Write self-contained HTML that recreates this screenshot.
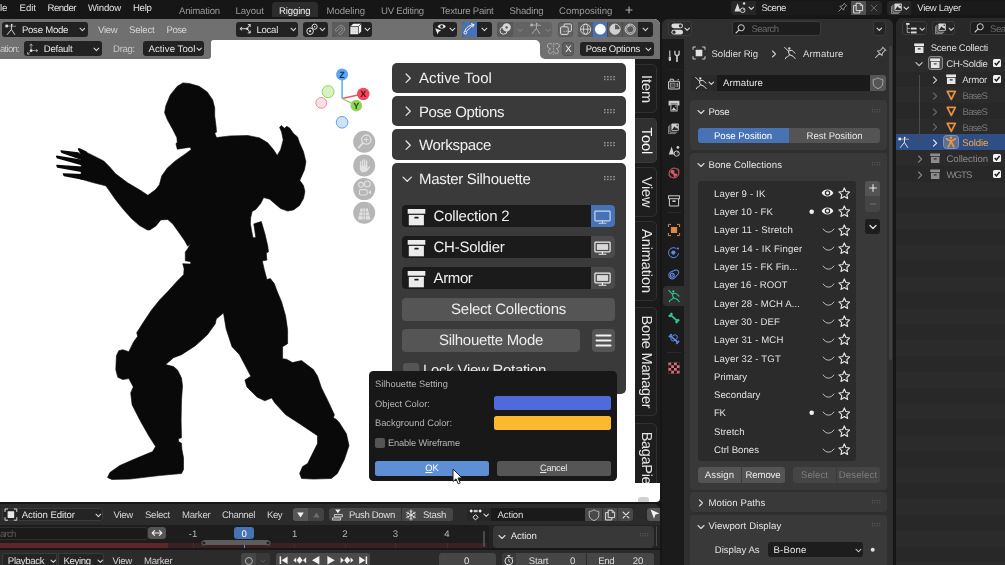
<!DOCTYPE html>
<html><head><meta charset="utf-8"><title>Blender</title>
<style>
html,body{margin:0;padding:0;background:#161616;overflow:hidden}
#r{will-change:transform;text-rendering:geometricPrecision;position:relative;width:1005px;height:565px;overflow:hidden;background:#161616;font-family:"Liberation Sans",sans-serif;}
#r div,#r span,#r svg{position:absolute;display:block;box-sizing:border-box}
#r span{white-space:nowrap}
</style></head><body><div id="r">
<div style="left:0px;top:0px;width:1005px;height:18.5px;background:#161616;border-radius:0px;"></div>
<span style="left:0.00px;top:2px;font-size:9.6px;line-height:14px;color:#e0e0e0;letter-spacing:-0.236px;">le</span>
<span style="left:19.50px;top:2px;font-size:9.6px;line-height:14px;color:#e0e0e0;letter-spacing:-0.010px;">Edit</span>
<span style="left:47.50px;top:2px;font-size:9.6px;line-height:14px;color:#e0e0e0;letter-spacing:-0.498px;">Render</span>
<span style="left:88.00px;top:2px;font-size:9.6px;line-height:14px;color:#e0e0e0;letter-spacing:-0.191px;">Window</span>
<span style="left:133.00px;top:2px;font-size:9.6px;line-height:14px;color:#e0e0e0;letter-spacing:-0.311px;">Help</span>
<div style="left:272px;top:2px;width:46px;height:15.3px;background:#2c2c2c;border-radius:4px 4px 0 0;"></div>
<span style="left:179.00px;top:5px;font-size:9.6px;line-height:14px;color:#9a9a9a;letter-spacing:-0.188px;">Animation</span>
<span style="left:235.50px;top:5px;font-size:9.6px;line-height:14px;color:#9a9a9a;letter-spacing:-0.054px;">Layout</span>
<span style="left:279.00px;top:5px;font-size:9.6px;line-height:14px;color:#f0f0f0;letter-spacing:-0.151px;">Rigging</span>
<span style="left:326.50px;top:5px;font-size:9.6px;line-height:14px;color:#9a9a9a;letter-spacing:-0.057px;">Modeling</span>
<span style="left:381.00px;top:5px;font-size:9.6px;line-height:14px;color:#9a9a9a;letter-spacing:-0.236px;">UV Editing</span>
<span style="left:440.50px;top:5px;font-size:9.6px;line-height:14px;color:#9a9a9a;letter-spacing:-0.233px;">Texture Paint</span>
<span style="left:509.50px;top:5px;font-size:9.6px;line-height:14px;color:#9a9a9a;letter-spacing:-0.176px;">Shading</span>
<span style="left:559.00px;top:5px;font-size:9.6px;line-height:14px;color:#9a9a9a;letter-spacing:0.013px;">Compositing</span>
<svg style="left:624px;top:5px;" width="10" height="10" viewBox="0 0 10 10"><path d="M5 1.5V8.5M1.5 5H8.5" stroke="#b0b0b0" stroke-width="1.1" fill="none"/></svg>
<div style="left:731.4px;top:0.8px;width:150.4px;height:14.4px;background:#262626;border-radius:3px;"></div>
<div style="left:756px;top:0.8px;width:94.8px;height:14.4px;background:#1a1a1a;border-radius:0px;"></div>
<div style="left:850.8px;top:0.8px;width:15.1px;height:14.4px;background:#505050;border-radius:0px;"></div>
<span style="left:761.50px;top:2px;font-size:9.6px;line-height:14px;color:#dcdcdc;letter-spacing:-0.564px;">Scene</span>
<div style="left:886.8px;top:0.8px;width:120px;height:14.4px;background:#262626;border-radius:3px 0 0 3px;"></div>
<div style="left:911.1px;top:0.8px;width:95px;height:14.4px;background:#1a1a1a;border-radius:0px;"></div>
<span style="left:917.30px;top:2px;font-size:9.6px;line-height:14px;color:#dcdcdc;letter-spacing:-0.382px;">View Layer</span>
<div style="left:0px;top:18.5px;width:659.8px;height:483.4px;background:#ffffff;border-radius:0 6px 4px 0;"></div>
<svg style="left:0px;top:60px;" width="400" height="430" viewBox="0 60 400 430"><polygon points="182.9,82.9 189.3,83.5 199.2,86.3 207.2,91.9 212.7,99.9 214.7,107.8 214.7,115.8 216.1,126.7 216.5,132.1 214.7,133.3 216.5,137.6 229.9,135.9 247.8,135.5 259.7,137.9 267.7,142.8 273.6,149.8 277.2,155.4 280.6,149.8 283.2,139.9 281.6,131.9 279.6,127.5 281.2,125.5 284.6,128.3 286.6,126.3 289.6,127.9 293.5,133.5 297.5,136.9 299.5,142.8 303.5,151.8 305.9,161.7 304.5,169.7 300.5,178.7 299.9,180.6 303.5,185.6 304.9,191.6 303.5,198.6 299.5,205.5 293.5,209.9 287.6,211.1 280.6,208.5 274.6,203.5 269.7,199.2 263.7,197.6 260.7,203.5 255.7,209.5 252.1,211.5 250.7,217.5 250.4,223.9 251.8,231.8 253.0,237.8 255.8,237.4 253.8,223.9 261.3,221.5 264.9,233.8 267.7,245.8 268.5,251.7 266.3,253.1 266.9,260.1 262.3,260.9 264.3,269.7 266.9,279.6 270.3,278.6 274.3,283.6 276.6,290.0 281.6,301.9 285.6,315.9 287.6,329.8 287.6,343.7 282.6,346.7 282.6,358.7 286.6,359.3 292.5,362.6 301.5,360.6 313.4,369.6 317.5,376.0 321.5,387.9 327.5,399.9 334.4,414.8 333.4,417.8 336.4,419.4 339.4,422.7 346.4,433.7 349.0,445.6 344.4,459.6 337.4,473.5 331.4,478.5 313.5,479.1 301.6,478.5 299.6,473.5 302.6,466.5 307.6,463.5 311.5,455.6 317.5,443.6 317.5,435.7 299.6,423.7 285.7,414.8 274.7,402.8 271.7,397.9 264.8,400.8 256.8,396.9 246.9,386.9 244.9,380.0 250.8,376.3 245.2,365.6 239.5,354.7 232.0,346.7 226.1,328.8 223.5,312.9 216.3,318.9 215.3,323.8 207.4,334.8 195.4,345.7 181.5,354.7 173.5,357.7 165.6,364.6 173.5,366.6 177.5,370.0 181.5,378.0 182.5,385.9 181.5,399.9 181.1,419.8 181.5,437.7 178.5,438.7 178.5,441.6 181.5,443.2 181.9,449.6 183.5,457.6 183.5,469.5 181.5,473.5 159.6,475.5 129.8,479.1 111.8,479.5 107.5,477.5 109.9,472.5 119.8,465.5 135.7,458.6 152.6,451.6 155.6,446.6 148.7,435.7 139.7,419.8 132.1,404.8 130.7,392.9 133.3,386.9 128.8,378.5 122.8,379.6 117.8,377.3 115.8,369.8 116.4,355.7 118.8,350.7 122.8,349.7 128.8,351.7 133.7,341.7 137.7,336.2 136.7,332.8 143.7,321.8 151.6,309.9 159.6,300.0 167.8,291.5 176.8,281.6 183.7,274.6 184.1,268.7 182.7,263.7 190.7,264.1 190.7,261.7 185.3,260.7 185.3,252.1 187.7,248.8 190.7,243.4 187.7,246.2 184.7,240.8 179.8,233.8 172.8,223.9 167.8,219.5 160.8,219.9 155.9,225.9 149.9,229.9 147.5,230.0 139.5,225.6 131.5,218.6 123.6,209.7 115.6,199.7 108.7,189.8 105.7,185.8 93.7,182.8 79.8,178.8 80.5,177.0 81.2,172.0 81.2,163.0 81.2,156.0 79.0,150.4 78.3,148.6 89.8,153.9 103.7,160.9 109.7,166.9 115.6,173.8 127.6,182.8 139.5,189.8 147.9,195.3 155.4,189.8 159.4,184.8 161.8,175.8 167.4,167.9 175.3,160.9 185.3,153.9 191.2,149.6 190.2,147.2 177.3,149.2 175.9,143.6 177.3,142.6 176.9,137.7 172.9,129.7 167.4,119.8 164.6,112.8 165.8,105.8 170.3,94.9 177.3,86.3" fill="#090909" stroke="#090909" stroke-width="0.6" stroke-linejoin="round"/><polygon points="61.2,150.9 78,153.0 82.5,156.6 82.5,159.6 61.9,152.2" fill="#090909" stroke="#090909" stroke-width="1.5" stroke-linejoin="round"/><polygon points="56.7,156.3 82.5,160.4 82.5,164.8 57.5,157.8" fill="#090909" stroke="#090909" stroke-width="1.5" stroke-linejoin="round"/><polygon points="57.0,165.5 82.5,167.2 82.5,171.4 57.6,167.1" fill="#090909" stroke="#090909" stroke-width="1.5" stroke-linejoin="round"/><polygon points="63.5,174.0 82.5,174.7 82.5,178.9 64.2,175.5" fill="#090909" stroke="#090909" stroke-width="1.5" stroke-linejoin="round"/><path d="M79.2 149.4L86 152.6" stroke="#090909" stroke-width="2.4" stroke-linecap="round"/></svg>
<svg style="left:310px;top:62px;" width="70" height="72" viewBox="310 62 70 72"><line x1="342.1" y1="98.5" x2="342.1" y2="80" stroke="#4c9af5" stroke-width="1.3"/>
<line x1="342.1" y1="98.5" x2="358" y2="95" stroke="#f0566a" stroke-width="1.3"/>
<line x1="342.1" y1="98.5" x2="352" y2="103.3" stroke="#8fd45a" stroke-width="1.3"/>
<circle cx="328.1" cy="91.7" r="6" fill="#d9f0c4" stroke="#93d65e" stroke-width="1"/>
<circle cx="321.3" cy="102.9" r="5.4" fill="#fbdfe5" stroke="#f08c9c" stroke-width="1"/>
<circle cx="342.1" cy="122.3" r="5.8" fill="#cfe2fb" stroke="#5aa2f3" stroke-width="1"/>
<circle cx="342.1" cy="74.6" r="6" fill="#5ea6f4"/>
<circle cx="363.3" cy="94" r="6.2" fill="#f0465e"/>
<circle cx="356.3" cy="105.6" r="5.8" fill="#8fd45a"/>
<text x="342.1" y="77.9" font-size="9" text-anchor="middle" fill="#1a2a4a" font-family="Liberation Sans, sans-serif" font-weight="bold">Z</text>
<text x="363.3" y="97.3" font-size="9" text-anchor="middle" fill="#5a0a18" font-family="Liberation Sans, sans-serif" font-weight="bold">X</text>
<text x="356.3" y="108.9" font-size="9" text-anchor="middle" fill="#2a4a10" font-family="Liberation Sans, sans-serif" font-weight="bold">Y</text></svg>
<svg style="left:350px;top:128px;" width="30" height="100" viewBox="350 128 30 100"><circle cx="364.2" cy="141.7" r="11" fill="#b6b6b6"/><circle cx="364.2" cy="165.5" r="11" fill="#b6b6b6"/><circle cx="364.2" cy="189.1" r="11" fill="#b6b6b6"/><circle cx="364.2" cy="212.7" r="11" fill="#b6b6b6"/><circle cx="366.3" cy="139.6" r="4.6" fill="none" stroke="#e2e2e2" stroke-width="1.3"/><path d="M362.8 143.2L358.6 147.6" stroke="#e2e2e2" stroke-width="1.8" stroke-linecap="round"/><path d="M366.3 137.2V142M363.9 139.6H368.7" stroke="#e2e2e2" stroke-width="1"/><g transform="translate(364.6,166.2) scale(0.84) translate(-365,-166)"><path d="M360.2 166.5V160.8M362.6 165.5V158.8M365.1 165.5V158.6M367.5 166V160" stroke="#e2e2e2" stroke-width="1.6" stroke-linecap="round" fill="none"/><path d="M359.4 165.5H368.3V168.5L370.8 165.8L371.8 166.8L368.2 171.8Q366.5 173.3 364 173.3Q360.3 173.3 359.4 169.5Z" fill="#e2e2e2"/></g><circle cx="361" cy="184.8" r="2.4" fill="none" stroke="#e2e2e2" stroke-width="1.1"/><circle cx="367.3" cy="183.9" r="2.9" fill="none" stroke="#e2e2e2" stroke-width="1.1"/><rect x="359.4" y="189.6" width="7.8" height="5.4" rx="1.6" fill="none" stroke="#e2e2e2" stroke-width="1.1"/><path d="M368.2 192.3L371 190.3V194.3Z" fill="#e2e2e2"/><g transform="translate(0,1.4)"><path d="M360.6 207H367.8L370.4 218H358Z" fill="#e2e2e2"/><path d="M359.8 210.6H368.8M359 214.4H369.6M363 206.6V218.5M365.5 206.6V218.5" stroke="#b6b6b6" stroke-width="0.8" fill="none"/></g></svg>
<div style="left:0px;top:18.5px;width:660px;height:21px;background:#707070;border-radius:0 6px 0 0;"></div>
<div style="left:0px;top:39px;width:211px;height:19.8px;background:#707070;border-radius:0 0 3px 0;"></div>
<div style="left:540px;top:39px;width:120px;height:19.7px;background:#707070;border-radius:0 0 0 5px;"></div>
<svg style="left:535px;top:39.5px;" width="5" height="5" viewBox="0 0 5 5"><path d="M0 0H5V5A5 5 0 0 0 0 0Z" fill="#707070"/></svg>
<svg style="left:211px;top:39.5px;" width="2.5" height="2.5" viewBox="0 0 2.5 2.5"><path d="M0 0H2.5A2.5 2.5 0 0 0 0 2.5Z" fill="#707070"/></svg>
<div style="left:1.6px;top:21.8px;width:86px;height:14.8px;background:#222222;border-radius:3px;"></div>
<span style="left:21.90px;top:24px;font-size:9.6px;line-height:14px;color:#e4e4e4;letter-spacing:-0.251px;">Pose Mode</span>
<svg style="left:78.6px;top:26.400000000000002px;" width="6.8" height="6.8" viewBox="0 0 6.8 6.8"><path d="M1 2.2 L3.4 4.6 L5.8 2.2" fill="none" stroke="#dcdcdc" stroke-width="1.05" stroke-linecap="round" stroke-linejoin="round"/></svg>
<span style="left:98.00px;top:24px;font-size:9.6px;line-height:14px;color:#d4d4d4;letter-spacing:-0.284px;">View</span>
<span style="left:129.00px;top:24px;font-size:9.6px;line-height:14px;color:#d4d4d4;letter-spacing:-0.197px;">Select</span>
<span style="left:166.50px;top:24px;font-size:9.6px;line-height:14px;color:#d4d4d4;letter-spacing:-0.470px;">Pose</span>
<div style="left:236px;top:21.8px;width:62.4px;height:14.8px;background:#222222;border-radius:3px;"></div>
<span style="left:256.50px;top:24px;font-size:9.6px;line-height:14px;color:#e4e4e4;letter-spacing:-0.290px;">Local</span>
<svg style="left:289.6px;top:26.400000000000002px;" width="6.8" height="6.8" viewBox="0 0 6.8 6.8"><path d="M1 2.2 L3.4 4.6 L5.8 2.2" fill="none" stroke="#dcdcdc" stroke-width="1.05" stroke-linecap="round" stroke-linejoin="round"/></svg>
<div style="left:303.1px;top:21.8px;width:24.7px;height:14.8px;background:#222222;border-radius:3px;"></div>
<svg style="left:319.40000000000003px;top:26.400000000000002px;" width="6.8" height="6.8" viewBox="0 0 6.8 6.8"><path d="M1 2.2 L3.4 4.6 L5.8 2.2" fill="none" stroke="#dcdcdc" stroke-width="1.05" stroke-linecap="round" stroke-linejoin="round"/></svg>
<div style="left:332.2px;top:21.8px;width:40.3px;height:14.8px;background:#222222;border-radius:3px;"></div>
<div style="left:332.2px;top:21.8px;width:16.8px;height:14.8px;background:#5c5c5c;border-radius:3px 0 0 3px;"></div>
<svg style="left:364.20000000000005px;top:26.400000000000002px;" width="6.8" height="6.8" viewBox="0 0 6.8 6.8"><path d="M1 2.2 L3.4 4.6 L5.8 2.2" fill="none" stroke="#dcdcdc" stroke-width="1.05" stroke-linecap="round" stroke-linejoin="round"/></svg>
<div style="left:432.5px;top:21.8px;width:24.6px;height:14.8px;background:#222222;border-radius:3px;"></div>
<svg style="left:448.8px;top:26.400000000000002px;" width="6.8" height="6.8" viewBox="0 0 6.8 6.8"><path d="M1 2.2 L3.4 4.6 L5.8 2.2" fill="none" stroke="#dcdcdc" stroke-width="1.05" stroke-linecap="round" stroke-linejoin="round"/></svg>
<div style="left:461.6px;top:21.8px;width:30.9px;height:14.8px;background:#222222;border-radius:3px;"></div>
<div style="left:461.6px;top:21.8px;width:15.6px;height:14.8px;background:#4772b3;border-radius:3px 0 0 3px;"></div>
<svg style="left:481.20000000000005px;top:26.400000000000002px;" width="6.8" height="6.8" viewBox="0 0 6.8 6.8"><path d="M1 2.2 L3.4 4.6 L5.8 2.2" fill="none" stroke="#dcdcdc" stroke-width="1.05" stroke-linecap="round" stroke-linejoin="round"/></svg>
<div style="left:497.1px;top:21.8px;width:55.4px;height:14.8px;background:#636363;border-radius:3px;"></div>
<div style="left:497.1px;top:21.8px;width:15.5px;height:14.8px;background:#575757;border-radius:3px 0 0 3px;"></div>
<div style="left:558.3px;top:21.8px;width:14.9px;height:14.8px;background:#636363;border-radius:3px;border:1px solid #555;"></div>
<div style="left:578.3px;top:21.8px;width:75.1px;height:14.8px;background:#222222;border-radius:3px;"></div>
<div style="left:578.3px;top:21.8px;width:59.5px;height:14.8px;background:#5a5a5a;border-radius:3px 0 0 3px;"></div>
<div style="left:593.2px;top:21.8px;width:14.2px;height:14.8px;background:#4772b3;border-radius:0px;"></div>
<div style="left:607.4px;top:21.8px;width:0.6px;height:14.8px;background:#4a4a4a;border-radius:0px;"></div>
<div style="left:622.2px;top:21.8px;width:0.6px;height:14.8px;background:#4a4a4a;border-radius:0px;"></div>
<svg style="left:642.2px;top:26.400000000000002px;" width="6.8" height="6.8" viewBox="0 0 6.8 6.8"><path d="M1 2.2 L3.4 4.6 L5.8 2.2" fill="none" stroke="#dcdcdc" stroke-width="1.05" stroke-linecap="round" stroke-linejoin="round"/></svg>
<span style="left:0.00px;top:43px;font-size:9.6px;line-height:14px;color:#c8c8c8;letter-spacing:-0.747px;">ation:</span>
<div style="left:23.5px;top:41.2px;width:78.5px;height:15.1px;background:#222222;border-radius:3px;"></div>
<span style="left:43.80px;top:43px;font-size:9.6px;line-height:14px;color:#e4e4e4;letter-spacing:-0.274px;">Default</span>
<svg style="left:92.89999999999999px;top:46.0px;" width="6.8" height="6.8" viewBox="0 0 6.8 6.8"><path d="M1 2.2 L3.4 4.6 L5.8 2.2" fill="none" stroke="#dcdcdc" stroke-width="1.05" stroke-linecap="round" stroke-linejoin="round"/></svg>
<span style="left:113.00px;top:43px;font-size:9.6px;line-height:14px;color:#c8c8c8;letter-spacing:-0.295px;">Drag:</span>
<div style="left:143px;top:41.2px;width:61.4px;height:15.1px;background:#222222;border-radius:3px;"></div>
<span style="left:148.50px;top:43px;font-size:9.6px;line-height:14px;color:#e4e4e4;letter-spacing:0.069px;">Active Tool</span>
<svg style="left:196.10000000000002px;top:46.199999999999996px;" width="6.4" height="6.4" viewBox="0 0 6.4 6.4"><path d="M1 2.1 L3.2 4.300000000000001 L5.4 2.1" fill="none" stroke="#dcdcdc" stroke-width="1.05" stroke-linecap="round" stroke-linejoin="round"/></svg>
<div style="left:562.4px;top:41.6px;width:11.8px;height:14.6px;background:#5e5e5e;border-radius:3px;border:1px solid #525252;"></div>
<span style="left:565.13px;top:43px;font-size:9.5px;line-height:14px;color:#f0f0f0;">X</span>
<div style="left:579.6px;top:41.6px;width:74.2px;height:14.6px;background:#222222;border-radius:3px;"></div>
<span style="left:585.70px;top:43px;font-size:9.6px;line-height:14px;color:#e4e4e4;letter-spacing:-0.277px;">Pose Options</span>
<svg style="left:645.4px;top:46.0px;" width="6.8" height="6.8" viewBox="0 0 6.8 6.8"><path d="M1 2.2 L3.4 4.6 L5.8 2.2" fill="none" stroke="#dcdcdc" stroke-width="1.05" stroke-linecap="round" stroke-linejoin="round"/></svg>
<div style="left:392px;top:62.5px;width:234px;height:30.5px;background:#3a3a3a;border-radius:5px;"></div>
<svg style="left:403.3px;top:72.8px;" width="10.4" height="10.4" viewBox="0 0 10.4 10.4"><path d="M3.1 1 L7.300000000000001 5.2 L3.1 9.4" fill="none" stroke="#e0e0e0" stroke-width="1.3" stroke-linecap="round" stroke-linejoin="round"/></svg>
<span style="left:419.00px;top:69px;font-size:15px;line-height:19px;color:#f0f0f0;letter-spacing:0.067px;">Active Tool</span>
<div style="left:392px;top:95.9px;width:234px;height:30.5px;background:#3a3a3a;border-radius:5px;"></div>
<svg style="left:403.3px;top:106.2px;" width="10.4" height="10.4" viewBox="0 0 10.4 10.4"><path d="M3.1 1 L7.300000000000001 5.2 L3.1 9.4" fill="none" stroke="#e0e0e0" stroke-width="1.3" stroke-linecap="round" stroke-linejoin="round"/></svg>
<span style="left:419.00px;top:103px;font-size:15px;line-height:19px;color:#f0f0f0;letter-spacing:-0.421px;">Pose Options</span>
<div style="left:392px;top:129.3px;width:234px;height:30.5px;background:#3a3a3a;border-radius:5px;"></div>
<svg style="left:403.3px;top:139.60000000000002px;" width="10.4" height="10.4" viewBox="0 0 10.4 10.4"><path d="M3.1 1 L7.300000000000001 5.2 L3.1 9.4" fill="none" stroke="#e0e0e0" stroke-width="1.3" stroke-linecap="round" stroke-linejoin="round"/></svg>
<span style="left:419.00px;top:136px;font-size:15px;line-height:19px;color:#f0f0f0;letter-spacing:-0.306px;">Workspace</span>
<div style="left:392px;top:162.7px;width:234px;height:231px;background:#3a3a3a;border-radius:5px;"></div>
<svg style="left:402.3px;top:174.3px;" width="10.4" height="10.4" viewBox="0 0 10.4 10.4"><path d="M1 3.1 L5.2 7.300000000000001 L9.4 3.1" fill="none" stroke="#e0e0e0" stroke-width="1.3" stroke-linecap="round" stroke-linejoin="round"/></svg>
<span style="left:419.00px;top:170px;font-size:15px;line-height:19px;color:#f0f0f0;letter-spacing:-0.307px;">Master Silhouette</span>
<svg style="left:604px;top:75.5px;" width="14.4" height="7.4" viewBox="0 0 14.4 7.4"><rect x="0.00" y="0.00" width="1.5" height="1.5" fill="#9a9a9a"/><rect x="0.00" y="2.70" width="1.5" height="1.5" fill="#9a9a9a"/><rect x="3.10" y="0.00" width="1.5" height="1.5" fill="#9a9a9a"/><rect x="3.10" y="2.70" width="1.5" height="1.5" fill="#9a9a9a"/><rect x="6.20" y="0.00" width="1.5" height="1.5" fill="#9a9a9a"/><rect x="6.20" y="2.70" width="1.5" height="1.5" fill="#9a9a9a"/><rect x="9.30" y="0.00" width="1.5" height="1.5" fill="#9a9a9a"/><rect x="9.30" y="2.70" width="1.5" height="1.5" fill="#9a9a9a"/></svg>
<svg style="left:604px;top:108.8px;" width="14.4" height="7.4" viewBox="0 0 14.4 7.4"><rect x="0.00" y="0.00" width="1.5" height="1.5" fill="#9a9a9a"/><rect x="0.00" y="2.70" width="1.5" height="1.5" fill="#9a9a9a"/><rect x="3.10" y="0.00" width="1.5" height="1.5" fill="#9a9a9a"/><rect x="3.10" y="2.70" width="1.5" height="1.5" fill="#9a9a9a"/><rect x="6.20" y="0.00" width="1.5" height="1.5" fill="#9a9a9a"/><rect x="6.20" y="2.70" width="1.5" height="1.5" fill="#9a9a9a"/><rect x="9.30" y="0.00" width="1.5" height="1.5" fill="#9a9a9a"/><rect x="9.30" y="2.70" width="1.5" height="1.5" fill="#9a9a9a"/></svg>
<svg style="left:604px;top:142.3px;" width="14.4" height="7.4" viewBox="0 0 14.4 7.4"><rect x="0.00" y="0.00" width="1.5" height="1.5" fill="#9a9a9a"/><rect x="0.00" y="2.70" width="1.5" height="1.5" fill="#9a9a9a"/><rect x="3.10" y="0.00" width="1.5" height="1.5" fill="#9a9a9a"/><rect x="3.10" y="2.70" width="1.5" height="1.5" fill="#9a9a9a"/><rect x="6.20" y="0.00" width="1.5" height="1.5" fill="#9a9a9a"/><rect x="6.20" y="2.70" width="1.5" height="1.5" fill="#9a9a9a"/><rect x="9.30" y="0.00" width="1.5" height="1.5" fill="#9a9a9a"/><rect x="9.30" y="2.70" width="1.5" height="1.5" fill="#9a9a9a"/></svg>
<svg style="left:604px;top:175.7px;" width="14.4" height="7.4" viewBox="0 0 14.4 7.4"><rect x="0.00" y="0.00" width="1.5" height="1.5" fill="#9a9a9a"/><rect x="0.00" y="2.70" width="1.5" height="1.5" fill="#9a9a9a"/><rect x="3.10" y="0.00" width="1.5" height="1.5" fill="#9a9a9a"/><rect x="3.10" y="2.70" width="1.5" height="1.5" fill="#9a9a9a"/><rect x="6.20" y="0.00" width="1.5" height="1.5" fill="#9a9a9a"/><rect x="6.20" y="2.70" width="1.5" height="1.5" fill="#9a9a9a"/><rect x="9.30" y="0.00" width="1.5" height="1.5" fill="#9a9a9a"/><rect x="9.30" y="2.70" width="1.5" height="1.5" fill="#9a9a9a"/></svg>
<div style="left:402.4px;top:204.7px;width:212.2px;height:22.6px;background:#1b1b1b;border-radius:4px;"></div>
<div style="left:590.7px;top:204.7px;width:23.9px;height:22.6px;background:#4772b3;border-radius:0 4px 4px 0;"></div>
<span style="left:433.50px;top:207px;font-size:15px;line-height:19px;color:#f0f0f0;letter-spacing:-0.198px;">Collection 2</span>
<svg style="left:406px;top:207.7px;" width="22" height="19" viewBox="0 0 22 19"><rect x="1.7" y="1" width="17.6" height="4.7" fill="#ececec"/><path d="M2.8 6.9H17.9V17.3H2.8Z" fill="#ececec"/><rect x="8.3" y="8.8" width="4.4" height="1.8" rx="0.9" fill="#1b1b1b"/></svg>
<svg style="left:590.7px;top:204.7px;" width="24" height="23" viewBox="0 0 24 23"><rect x="3.9" y="6.2" width="15.2" height="9.6" rx="0.8" fill="none" stroke="#c6d6f2" stroke-width="1.2"/><path d="M11.5 15.8V18M7.6 18.3H15.4" stroke="#c6d6f2" stroke-width="1.1"/></svg>
<div style="left:402.4px;top:235.7px;width:212.2px;height:22.6px;background:#1b1b1b;border-radius:4px;"></div>
<div style="left:590.7px;top:235.7px;width:23.9px;height:22.6px;background:#4b4b4b;border-radius:0 4px 4px 0;"></div>
<span style="left:433.50px;top:238px;font-size:15px;line-height:19px;color:#f0f0f0;letter-spacing:-0.235px;">CH-Soldier</span>
<svg style="left:406px;top:238.7px;" width="22" height="19" viewBox="0 0 22 19"><rect x="1.7" y="1" width="17.6" height="4.7" fill="#ececec"/><path d="M2.8 6.9H17.9V17.3H2.8Z" fill="#ececec"/><rect x="8.3" y="8.8" width="4.4" height="1.8" rx="0.9" fill="#1b1b1b"/></svg>
<svg style="left:590.7px;top:235.7px;" width="24" height="23" viewBox="0 0 24 23"><rect x="3.9" y="6.2" width="15.2" height="9.6" rx="0.8" fill="none" stroke="#f0f0f0" stroke-width="1.2"/><rect x="5.9" y="8.1" width="11.2" height="5.8" fill="#d8d8d8"/><path d="M11.5 15.8V18M7.6 18.3H15.4" stroke="#f0f0f0" stroke-width="1.1"/></svg>
<div style="left:402.4px;top:266.7px;width:212.2px;height:22.6px;background:#1b1b1b;border-radius:4px;"></div>
<div style="left:590.7px;top:266.7px;width:23.9px;height:22.6px;background:#4b4b4b;border-radius:0 4px 4px 0;"></div>
<span style="left:433.50px;top:269px;font-size:15px;line-height:19px;color:#f0f0f0;letter-spacing:-0.367px;">Armor</span>
<svg style="left:406px;top:269.7px;" width="22" height="19" viewBox="0 0 22 19"><rect x="1.7" y="1" width="17.6" height="4.7" fill="#ececec"/><path d="M2.8 6.9H17.9V17.3H2.8Z" fill="#ececec"/><rect x="8.3" y="8.8" width="4.4" height="1.8" rx="0.9" fill="#1b1b1b"/></svg>
<svg style="left:590.7px;top:266.7px;" width="24" height="23" viewBox="0 0 24 23"><rect x="3.9" y="6.2" width="15.2" height="9.6" rx="0.8" fill="none" stroke="#f0f0f0" stroke-width="1.2"/><rect x="5.9" y="8.1" width="11.2" height="5.8" fill="#d8d8d8"/><path d="M11.5 15.8V18M7.6 18.3H15.4" stroke="#f0f0f0" stroke-width="1.1"/></svg>
<div style="left:402.4px;top:297.6px;width:212.2px;height:23px;background:#555555;border-radius:4px;"></div>
<span style="left:451.00px;top:300px;font-size:15px;line-height:19px;color:#ececec;letter-spacing:-0.234px;">Select Collections</span>
<div style="left:402.4px;top:328.6px;width:178px;height:23px;background:#555555;border-radius:4px;"></div>
<span style="left:439.00px;top:331px;font-size:15px;line-height:19px;color:#ececec;letter-spacing:-0.294px;">Silhouette Mode</span>
<div style="left:592px;top:328.6px;width:22.6px;height:23px;background:#555555;border-radius:4px;"></div>
<svg style="left:595px;top:332px;" width="17" height="17" viewBox="0 0 17 17"><path d="M1.5 3.5H15.5M1.5 8.5H15.5M1.5 13.5H15.5" stroke="#f2f2f2" stroke-width="2" stroke-linecap="round"/></svg>
<div style="left:402.7px;top:362.8px;width:16px;height:16px;background:#555555;border-radius:3px;"></div>
<span style="left:423.00px;top:361px;font-size:15px;line-height:19px;color:#ececec;letter-spacing:-0.285px;">Lock View Rotation</span>
<div style="left:635.2px;top:59px;width:24.8px;height:424.1px;overflow:hidden;background:#1b1b1b">
<div style="left:0;top:5px;width:21.6px;height:49.400000000000006px;background:#1e1e1e;border-radius:0 5px 5px 0;border:1px solid #303030;border-left:none;"></div>
<span style="left:10.8px;top:29.700000000000003px;font-size:14.5px;line-height:18px;color:#e6e6e6;letter-spacing:-0.050px;transform:translate(-50%,-50%) rotate(90deg);">Item</span>
<div style="left:0;top:58.7px;width:21.6px;height:45.60000000000001px;background:#303030;border-radius:0 5px 5px 0;border:1px solid #3a3a3a;border-left:none;"></div>
<span style="left:10.8px;top:81.5px;font-size:14.5px;line-height:18px;color:#ffffff;letter-spacing:0.050px;transform:translate(-50%,-50%) rotate(90deg);">Tool</span>
<div style="left:0;top:108px;width:21.6px;height:49.80000000000001px;background:#1e1e1e;border-radius:0 5px 5px 0;border:1px solid #303030;border-left:none;"></div>
<span style="left:10.8px;top:132.9px;font-size:14.5px;line-height:18px;color:#e6e6e6;letter-spacing:-0.167px;transform:translate(-50%,-50%) rotate(90deg);">View</span>
<div style="left:0;top:162.3px;width:21.6px;height:80.09999999999997px;background:#1e1e1e;border-radius:0 5px 5px 0;border:1px solid #303030;border-left:none;"></div>
<span style="left:10.8px;top:202.35000000000002px;font-size:14.5px;line-height:18px;color:#e6e6e6;letter-spacing:-0.075px;transform:translate(-50%,-50%) rotate(90deg);">Animation</span>
<div style="left:0;top:247.89999999999998px;width:21.6px;height:109.40000000000003px;background:#1e1e1e;border-radius:0 5px 5px 0;border:1px solid #303030;border-left:none;"></div>
<span style="left:10.8px;top:302.6px;font-size:14.5px;line-height:18px;color:#e6e6e6;letter-spacing:-0.185px;transform:translate(-50%,-50%) rotate(90deg);">Bone Manager</span>
<div style="left:0;top:364px;width:21.6px;height:70px;background:#1e1e1e;border-radius:0 5px 5px 0;border:1px solid #303030;border-left:none;"></div>
<span style="left:10.8px;top:399.0px;font-size:14.5px;line-height:18px;color:#e6e6e6;letter-spacing:-0.332px;transform:translate(-50%,-50%) rotate(90deg);">BagaPie</span>
</div>
<div style="left:637.8px;top:497.3px;width:11px;height:4.7px;background:#d0d0d0;border-radius:3px 3px 0 0;"></div>
<div style="left:369px;top:370.5px;width:248px;height:110.6px;background:#181818;border-radius:4.5px;"></div>
<span style="left:375.00px;top:378px;font-size:9.3px;line-height:13px;color:#b4b4b4;letter-spacing:0.005px;">Silhouette Setting</span>
<span style="left:375.00px;top:398px;font-size:9.3px;line-height:13px;color:#b4b4b4;letter-spacing:0.056px;">Object Color:</span>
<div style="left:493.5px;top:396px;width:117.5px;height:14.2px;background:#4f6bda;border-radius:2.5px;"></div>
<span style="left:375.00px;top:417px;font-size:9.3px;line-height:13px;color:#b4b4b4;letter-spacing:-0.001px;">Background Color:</span>
<div style="left:493.5px;top:416px;width:117.5px;height:14.2px;background:#fdb92e;border-radius:2.5px;"></div>
<div style="left:375px;top:437.8px;width:10.2px;height:10.2px;background:#555555;border-radius:2px;"></div>
<span style="left:388.00px;top:437px;font-size:9.3px;line-height:13px;color:#b4b4b4;letter-spacing:-0.152px;">Enable Wireframe</span>
<div style="left:375px;top:460.5px;width:113.9px;height:15px;background:#5e8ed4;border-radius:2.5px;"></div>
<span style="left:425.28px;top:462px;font-size:9.3px;line-height:13px;color:#ffffff;"><u style="text-decoration-thickness:0.7px;text-underline-offset:1px">O</u>K</span>
<div style="left:496.5px;top:460.5px;width:114.5px;height:15px;background:#555555;border-radius:2.5px;"></div>
<span style="left:540.00px;top:462px;font-size:9.3px;line-height:13px;color:#e8e8e8;letter-spacing:-0.325px;"><u style="text-decoration-thickness:0.7px;text-underline-offset:1px">C</u>ancel</span>
<svg style="left:451px;top:468px;" width="14" height="18" viewBox="0 0 14 18"><path d="M2 1 L2 13.5 L5 10.8 L7.2 15.8 L9.2 14.9 L7 10 L11 10 Z" fill="#fff" stroke="#222" stroke-width="1"/></svg>
<svg style="left:4.2px;top:23px;" width="14" height="14" viewBox="4.2 23 14 14"><rect x="5.6000000000000005" y="24.7" width="2.6" height="2.6" fill="#e4e4e4"/><path d="M8.2 26L15.8 26.3" fill="none" stroke="#a8a8a8" stroke-width="0.8" stroke-linecap="round"/><path d="M11.8 24.6L11.600000000000001 29.4L7.5 34.5M11.600000000000001 29.4L14.899999999999999 34.5" fill="none" stroke="#e4e4e4" stroke-width="0.9" stroke-linecap="round" stroke-linejoin="round"/><circle cx="11.9" cy="24.7" r="0.85" fill="#e4e4e4"/></svg>
<svg style="left:25px;top:42px;" width="16" height="14" viewBox="25 42 16 14"><path d="M31.1 48.8V44.2M29.9 45.5L31.1 43.9L32.3 45.5M33.2 50.6H37.4M36.3 49.5L37.8 50.6L36.3 51.7M29.8 51.9L27.7 54M27.5 52.6V54.2H29.1" fill="none" stroke="#b4b4b4" stroke-width="0.8" stroke-linecap="round" stroke-linejoin="round"/><circle cx="31.2" cy="50.6" r="1.4" fill="#f0f0f0"/></svg>
<svg style="left:238px;top:22px;" width="15" height="14" viewBox="238 22 15 14"><path d="M240.2 28.7H246.6M241.8 27.3L240 28.7L241.8 30.1M247.2 28.7L250 24.6M248.2 24.6H250.2V26.6M247.2 28.7L250 32.8M248.2 32.9H250.2V30.9" fill="none" stroke="#dcdcdc" stroke-width="0.95" stroke-linecap="round" stroke-linejoin="round"/><circle cx="247.2" cy="28.7" r="1.2" fill="#dcdcdc"/></svg>
<svg style="left:305px;top:22px;" width="14" height="14" viewBox="305 22 14 14"><circle cx="310.1" cy="31.2" r="3.3" fill="none" stroke="#e0e0e0" stroke-width="1"/><circle cx="310.1" cy="31.2" r="1.1" fill="#e0e0e0"/><circle cx="314.6" cy="26.7" r="2.6" fill="none" stroke="#e0e0e0" stroke-width="1"/><circle cx="314.6" cy="26.7" r="0.8" fill="#e0e0e0"/></svg>
<svg style="left:333px;top:22px;" width="16" height="14" viewBox="333 22 16 14"><path transform="translate(340.6,29.4) rotate(45)" d="M-3.7 4.2V-0.6A3.7 3.7 0 0 1 3.7 -0.6V4.2H1.5V-0.6A1.5 1.5 0 0 0 -1.5 -0.6V4.2Z" fill="none" stroke="#909090" stroke-width="0.9" stroke-linejoin="round"/></svg>
<svg style="left:349px;top:22px;" width="14" height="14" viewBox="349 22 14 14"><path d="M350.4 26.6L353.2 23.8H361.2V31.4L358.4 34.3H350.4Z" fill="#f2f2f2"/><path d="M350.4 26.6H358.4V34.3M358.4 26.6L361.2 23.8" fill="none" stroke="#2a2a2a" stroke-width="0.8"/><path d="M353 26.8V34M355.7 26.8V34M350.6 29.2H358.2M350.6 31.8H358.2" stroke="#bdbdbd" stroke-width="0.5"/></svg>
<svg style="left:434px;top:22px;" width="16" height="14" viewBox="434 22 16 14"><path d="M437.6 26.4C439.3 23.6 444 23.6 445.8 26.4C444 29.2 439.3 29.2 437.6 26.4Z" fill="#ececec"/><circle cx="441.7" cy="26.4" r="1.5" fill="#2a2a2a"/><path d="M435.2 28.2L441.2 30.6L438.6 31.7L437.6 34.4Z" fill="#ececec"/></svg>
<svg style="left:462px;top:22px;" width="16" height="14" viewBox="462 22 16 14"><path d="M464.4 33.4C464.8 28 468.6 25.2 473.8 24.6M471.4 23.8L474 24.5L472.8 27M465.3 32.5L472.8 25" fill="none" stroke="#f4f4f4" stroke-width="1" stroke-linecap="round" stroke-linejoin="round"/><circle cx="465.4" cy="32.6" r="1.4" fill="#4772b3" stroke="#f4f4f4" stroke-width="0.9"/></svg>
<svg style="left:498px;top:22px;" width="16" height="14" viewBox="498 22 16 14"><circle cx="506.6" cy="27.4" r="4.2" fill="#d6d6d6"/><circle cx="503.6" cy="30.6" r="3.6" fill="none" stroke="#d6d6d6" stroke-width="1"/><circle cx="506.6" cy="27.4" r="1.2" fill="#555"/></svg>
<svg style="left:516.7px;top:26.5px;" width="6.6" height="6.6" viewBox="0 0 6.6 6.6"><path d="M1 2.15 L3.3 4.449999999999999 L5.6 2.15" fill="none" stroke="#7c7c7c" stroke-width="1.1" stroke-linecap="round" stroke-linejoin="round"/></svg>
<svg style="left:529.4px;top:22.4px;" width="14" height="14" viewBox="529.4 22.4 14 14"><rect x="530.8" y="24.099999999999998" width="2.6" height="2.6" fill="#b4b4b4"/><path d="M533.4 25.4L541.0 25.7" fill="none" stroke="#b4b4b4" stroke-width="0.8" stroke-linecap="round"/><path d="M537.0 24.0L536.8 28.799999999999997L532.6999999999999 33.9M536.8 28.799999999999997L540.1 33.9" fill="none" stroke="#b4b4b4" stroke-width="0.9" stroke-linecap="round" stroke-linejoin="round"/><circle cx="537.1" cy="24.099999999999998" r="0.85" fill="#b4b4b4"/></svg>
<svg style="left:545.4000000000001px;top:26.5px;" width="6.6" height="6.6" viewBox="0 0 6.6 6.6"><path d="M1 2.15 L3.3 4.449999999999999 L5.6 2.15" fill="none" stroke="#7c7c7c" stroke-width="1.1" stroke-linecap="round" stroke-linejoin="round"/></svg>
<svg style="left:559px;top:22px;" width="15" height="15" viewBox="559 22 15 15"><rect x="564" y="24" width="7.4" height="7.4" rx="1" fill="none" stroke="#e4e4e4" stroke-width="0.95"/><rect x="560.6" y="26.8" width="7.6" height="7.6" rx="1" fill="#636363" stroke="#e4e4e4" stroke-width="0.95"/><path d="M563.6 31.3H564.6M565.8 31.3H566.8" stroke="#e4e4e4" stroke-width="0.8"/></svg>
<svg style="left:579px;top:22px;" width="60" height="15" viewBox="579 22 60 15"><circle cx="585.6" cy="29.2" r="5.1" fill="none" stroke="#e0e0e0" stroke-width="0.9"/><ellipse cx="585.6" cy="29.2" rx="2.2" ry="5.1" fill="none" stroke="#e0e0e0" stroke-width="0.8"/><path d="M580.5 29.2H590.7" stroke="#e0e0e0" stroke-width="0.8"/>
<circle cx="600.3" cy="29.2" r="5.4" fill="#ffffff"/>
<circle cx="615" cy="29.2" r="5.1" fill="none" stroke="#e0e0e0" stroke-width="0.9"/><path d="M615 24.1A5.1 5.1 0 1 0 620.1 29.2L615 29.2Z" fill="#d0d0d0"/>
<circle cx="630.2" cy="29.2" r="5.1" fill="none" stroke="#e0e0e0" stroke-width="0.9"/><circle cx="630.2" cy="29.2" r="3.6" fill="none" stroke="#a0a0a0" stroke-width="1.4"/><path d="M627.4 27.4A3.4 3.4 0 0 1 629.6 25.6" stroke="#f0f0f0" stroke-width="0.9" fill="none"/></svg>
<svg style="left:546px;top:42px;" width="15" height="15" viewBox="546 42 15 15"><path d="M552.2 44.4C550 42.6 547.2 43.6 547.4 46C547.6 47.6 549 48.4 550.4 48.8C548.6 49.6 548 51.4 548.8 52.8C549.8 54.4 552 53.8 552.2 51.6M554.6 44.4C556.8 42.6 559.6 43.6 559.4 46C559.2 47.6 557.8 48.4 556.4 48.8C558.2 49.6 558.8 51.4 558 52.8C557 54.4 554.8 53.8 554.6 51.6" fill="none" stroke="#b8b8b8" stroke-width="0.9"/><path d="M553.4 43V55.4" stroke="#b8b8b8" stroke-width="0.8" stroke-dasharray="1.6 1"/></svg>
<div style="left:661.8px;top:18.8px;width:231.2px;height:547px;background:#2f2f2f;border-radius:6px 6px 0 0;"></div>
<div style="left:661.8px;top:38.5px;width:22.5px;height:527px;background:#1b1b1b;border-radius:0px;"></div>
<div style="left:668.4px;top:21px;width:23.8px;height:14.8px;background:#2b2b2b;border-radius:3px;border:1px solid #3c3c3c;"></div>
<svg style="left:684.1999999999999px;top:25.8px;" width="6.4" height="6.4" viewBox="0 0 6.4 6.4"><path d="M1 2.1 L3.2 4.300000000000001 L5.4 2.1" fill="none" stroke="#dcdcdc" stroke-width="1.05" stroke-linecap="round" stroke-linejoin="round"/></svg>
<div style="left:731.6px;top:21.3px;width:89.6px;height:14.6px;background:#1d1d1d;border-radius:3px;border:1px solid #3c3c3c;"></div>
<span style="left:751.40px;top:23px;font-size:9.6px;line-height:14px;color:#6a6a6a;letter-spacing:-0.519px;">Search</span>
<div style="left:873px;top:21.3px;width:13.4px;height:14.6px;background:#252525;border-radius:3px;border:1px solid #3a3a3a;"></div>
<svg style="left:876.4000000000001px;top:26.0px;" width="6.6" height="6.6" viewBox="0 0 6.6 6.6"><path d="M1 2.15 L3.3 4.449999999999999 L5.6 2.15" fill="none" stroke="#dcdcdc" stroke-width="1.05" stroke-linecap="round" stroke-linejoin="round"/></svg>
<span style="left:711.50px;top:48px;font-size:9.6px;line-height:14px;color:#dcdcdc;letter-spacing:-0.041px;">Soldier Rig</span>
<svg style="left:770px;top:49.5px;" width="8" height="8" viewBox="0 0 8 8"><path d="M2.5 1 L5.5 4 L2.5 7" fill="none" stroke="#cfcfcf" stroke-width="1.1" stroke-linecap="round" stroke-linejoin="round"/></svg>
<span style="left:803.00px;top:48px;font-size:9.6px;line-height:14px;color:#dcdcdc;letter-spacing:0.128px;">Armature</span>
<div style="left:691.4px;top:75.3px;width:195px;height:15.5px;background:#2a2a2a;border-radius:3px;"></div>
<div style="left:717px;top:75.3px;width:153px;height:15.5px;background:#1a1a1a;border-radius:0px;"></div>
<div style="left:870px;top:75.3px;width:16.4px;height:15.5px;background:#555555;border-radius:0 3px 3px 0;"></div>
<svg style="left:708.2px;top:80.2px;" width="6.6" height="6.6" viewBox="0 0 6.6 6.6"><path d="M1 2.15 L3.3 4.449999999999999 L5.6 2.15" fill="none" stroke="#dcdcdc" stroke-width="1.05" stroke-linecap="round" stroke-linejoin="round"/></svg>
<span style="left:723.00px;top:77px;font-size:9.6px;line-height:14px;color:#e6e6e6;letter-spacing:0.065px;">Armature</span>
<div style="left:690.3px;top:100.3px;width:196.5px;height:50px;background:#393939;border-radius:4px;"></div>
<svg style="left:696.5px;top:108px;" width="8" height="8" viewBox="0 0 8 8"><path d="M1 2.5 L4 5.5 L7 2.5" fill="none" stroke="#d8d8d8" stroke-width="1.1" stroke-linecap="round" stroke-linejoin="round"/></svg>
<span style="left:708.40px;top:106px;font-size:9.6px;line-height:14px;color:#e6e6e6;letter-spacing:-0.220px;">Pose</span>
<svg style="left:872px;top:108.5px;" width="11.6" height="6.4" viewBox="0 0 11.6 6.4"><rect x="0.00" y="0.00" width="1.1" height="1.1" fill="#5a5a5a"/><rect x="0.00" y="2.20" width="1.1" height="1.1" fill="#5a5a5a"/><rect x="2.40" y="0.00" width="1.1" height="1.1" fill="#5a5a5a"/><rect x="2.40" y="2.20" width="1.1" height="1.1" fill="#5a5a5a"/><rect x="4.80" y="0.00" width="1.1" height="1.1" fill="#5a5a5a"/><rect x="4.80" y="2.20" width="1.1" height="1.1" fill="#5a5a5a"/><rect x="7.20" y="0.00" width="1.1" height="1.1" fill="#5a5a5a"/><rect x="7.20" y="2.20" width="1.1" height="1.1" fill="#5a5a5a"/></svg>
<div style="left:698px;top:128.4px;width:90.5px;height:15px;background:#4772b3;border-radius:3px 0 0 3px;"></div>
<span style="left:714.00px;top:130px;font-size:9.6px;line-height:14px;color:#ffffff;letter-spacing:-0.054px;">Pose Position</span>
<div style="left:789px;top:128.4px;width:91px;height:15px;background:#545454;border-radius:0 3px 3px 0;"></div>
<span style="left:806.50px;top:130px;font-size:9.6px;line-height:14px;color:#e6e6e6;letter-spacing:-0.043px;">Rest Position</span>
<div style="left:690.3px;top:153.4px;width:196.5px;height:336.2px;background:#393939;border-radius:4px;"></div>
<svg style="left:696.5px;top:161px;" width="8" height="8" viewBox="0 0 8 8"><path d="M1 2.5 L4 5.5 L7 2.5" fill="none" stroke="#d8d8d8" stroke-width="1.1" stroke-linecap="round" stroke-linejoin="round"/></svg>
<span style="left:708.40px;top:159px;font-size:9.6px;line-height:14px;color:#e6e6e6;letter-spacing:0.104px;">Bone Collections</span>
<svg style="left:872px;top:161.5px;" width="11.6" height="6.4" viewBox="0 0 11.6 6.4"><rect x="0.00" y="0.00" width="1.1" height="1.1" fill="#5a5a5a"/><rect x="0.00" y="2.20" width="1.1" height="1.1" fill="#5a5a5a"/><rect x="2.40" y="0.00" width="1.1" height="1.1" fill="#5a5a5a"/><rect x="2.40" y="2.20" width="1.1" height="1.1" fill="#5a5a5a"/><rect x="4.80" y="0.00" width="1.1" height="1.1" fill="#5a5a5a"/><rect x="4.80" y="2.20" width="1.1" height="1.1" fill="#5a5a5a"/><rect x="7.20" y="0.00" width="1.1" height="1.1" fill="#5a5a5a"/><rect x="7.20" y="2.20" width="1.1" height="1.1" fill="#5a5a5a"/></svg>
<div style="left:698.2px;top:180.6px;width:157.8px;height:280.4px;background:#2b2b2b;border-radius:3px;"></div>
<span style="left:714.00px;top:188px;font-size:9.6px;line-height:14px;color:#e2e2e2;letter-spacing:0.157px;">Layer 9 - IK</span>
<svg style="left:837.9px;top:186.9px;" width="12.6" height="12.6" viewBox="0 0 12 12"><path d="M6 0.9 L7.5 4.3 L11.2 4.7 L8.4 7.2 L9.2 10.9 L6 9 L2.8 10.9 L3.6 7.2 L0.8 4.7 L4.5 4.3 Z" fill="none" stroke="#e8e8e8" stroke-width="1.05" stroke-linejoin="round"/></svg>
<svg style="left:821.4px;top:188.0px;" width="13" height="10" viewBox="0 0 13 10"><path d="M0.6 5 C3 0.4 10 0.4 12.4 5 C10 9.6 3 9.6 0.6 5 Z" fill="#f4f4f4"/><circle cx="6.5" cy="5" r="2.75" fill="#2b2b2b"/><circle cx="6.5" cy="5" r="1.45" fill="#f4f4f4"/></svg>
<span style="left:714.00px;top:206px;font-size:9.6px;line-height:14px;color:#e2e2e2;letter-spacing:0.065px;">Layer 10 - FK</span>
<svg style="left:837.9px;top:205.21px;" width="12.6" height="12.6" viewBox="0 0 12 12"><path d="M6 0.9 L7.5 4.3 L11.2 4.7 L8.4 7.2 L9.2 10.9 L6 9 L2.8 10.9 L3.6 7.2 L0.8 4.7 L4.5 4.3 Z" fill="none" stroke="#e8e8e8" stroke-width="1.05" stroke-linejoin="round"/></svg>
<svg style="left:821.4px;top:206.31px;" width="13" height="10" viewBox="0 0 13 10"><path d="M0.6 5 C3 0.4 10 0.4 12.4 5 C10 9.6 3 9.6 0.6 5 Z" fill="#f4f4f4"/><circle cx="6.5" cy="5" r="2.75" fill="#2b2b2b"/><circle cx="6.5" cy="5" r="1.45" fill="#f4f4f4"/></svg>
<svg style="left:809px;top:208.91000000000003px;" width="6" height="6" viewBox="0 0 6 6"><circle cx="2.7" cy="2.7" r="2.3" fill="#f0f0f0"/></svg>
<span style="left:714.00px;top:224px;font-size:9.6px;line-height:14px;color:#e2e2e2;letter-spacing:0.190px;">Layer 11 - Stretch</span>
<svg style="left:837.9px;top:223.52px;" width="12.6" height="12.6" viewBox="0 0 12 12"><path d="M6 0.9 L7.5 4.3 L11.2 4.7 L8.4 7.2 L9.2 10.9 L6 9 L2.8 10.9 L3.6 7.2 L0.8 4.7 L4.5 4.3 Z" fill="none" stroke="#e8e8e8" stroke-width="1.05" stroke-linejoin="round"/></svg>
<svg style="left:821.5px;top:226.92000000000002px;" width="13" height="8" viewBox="0 0 13 8"><path d="M1.2 2 C3.5 6.3 9.5 6.3 11.8 2" fill="none" stroke="#bdbdbd" stroke-width="1" stroke-linecap="round"/></svg>
<span style="left:714.00px;top:243px;font-size:9.6px;line-height:14px;color:#e2e2e2;letter-spacing:0.178px;">Layer 14 - IK Finger</span>
<svg style="left:837.9px;top:241.83px;" width="12.6" height="12.6" viewBox="0 0 12 12"><path d="M6 0.9 L7.5 4.3 L11.2 4.7 L8.4 7.2 L9.2 10.9 L6 9 L2.8 10.9 L3.6 7.2 L0.8 4.7 L4.5 4.3 Z" fill="none" stroke="#e8e8e8" stroke-width="1.05" stroke-linejoin="round"/></svg>
<svg style="left:821.5px;top:245.23000000000002px;" width="13" height="8" viewBox="0 0 13 8"><path d="M1.2 2 C3.5 6.3 9.5 6.3 11.8 2" fill="none" stroke="#bdbdbd" stroke-width="1" stroke-linecap="round"/></svg>
<span style="left:714.00px;top:261px;font-size:9.6px;line-height:14px;color:#e2e2e2;letter-spacing:0.067px;">Layer 15 - FK Fin...</span>
<svg style="left:837.9px;top:260.14000000000004px;" width="12.6" height="12.6" viewBox="0 0 12 12"><path d="M6 0.9 L7.5 4.3 L11.2 4.7 L8.4 7.2 L9.2 10.9 L6 9 L2.8 10.9 L3.6 7.2 L0.8 4.7 L4.5 4.3 Z" fill="none" stroke="#e8e8e8" stroke-width="1.05" stroke-linejoin="round"/></svg>
<svg style="left:821.5px;top:263.54px;" width="13" height="8" viewBox="0 0 13 8"><path d="M1.2 2 C3.5 6.3 9.5 6.3 11.8 2" fill="none" stroke="#bdbdbd" stroke-width="1" stroke-linecap="round"/></svg>
<span style="left:714.00px;top:279px;font-size:9.6px;line-height:14px;color:#e2e2e2;letter-spacing:-0.008px;">Layer 16 - ROOT</span>
<svg style="left:837.9px;top:278.45000000000005px;" width="12.6" height="12.6" viewBox="0 0 12 12"><path d="M6 0.9 L7.5 4.3 L11.2 4.7 L8.4 7.2 L9.2 10.9 L6 9 L2.8 10.9 L3.6 7.2 L0.8 4.7 L4.5 4.3 Z" fill="none" stroke="#e8e8e8" stroke-width="1.05" stroke-linejoin="round"/></svg>
<svg style="left:821.5px;top:281.85px;" width="13" height="8" viewBox="0 0 13 8"><path d="M1.2 2 C3.5 6.3 9.5 6.3 11.8 2" fill="none" stroke="#bdbdbd" stroke-width="1" stroke-linecap="round"/></svg>
<span style="left:714.00px;top:298px;font-size:9.6px;line-height:14px;color:#e2e2e2;letter-spacing:0.090px;">Layer 28 - MCH A...</span>
<svg style="left:837.9px;top:296.76px;" width="12.6" height="12.6" viewBox="0 0 12 12"><path d="M6 0.9 L7.5 4.3 L11.2 4.7 L8.4 7.2 L9.2 10.9 L6 9 L2.8 10.9 L3.6 7.2 L0.8 4.7 L4.5 4.3 Z" fill="none" stroke="#e8e8e8" stroke-width="1.05" stroke-linejoin="round"/></svg>
<svg style="left:821.5px;top:300.15999999999997px;" width="13" height="8" viewBox="0 0 13 8"><path d="M1.2 2 C3.5 6.3 9.5 6.3 11.8 2" fill="none" stroke="#bdbdbd" stroke-width="1" stroke-linecap="round"/></svg>
<span style="left:714.00px;top:316px;font-size:9.6px;line-height:14px;color:#e2e2e2;letter-spacing:0.065px;">Layer 30 - DEF</span>
<svg style="left:837.9px;top:315.07000000000005px;" width="12.6" height="12.6" viewBox="0 0 12 12"><path d="M6 0.9 L7.5 4.3 L11.2 4.7 L8.4 7.2 L9.2 10.9 L6 9 L2.8 10.9 L3.6 7.2 L0.8 4.7 L4.5 4.3 Z" fill="none" stroke="#e8e8e8" stroke-width="1.05" stroke-linejoin="round"/></svg>
<svg style="left:821.5px;top:318.47px;" width="13" height="8" viewBox="0 0 13 8"><path d="M1.2 2 C3.5 6.3 9.5 6.3 11.8 2" fill="none" stroke="#bdbdbd" stroke-width="1" stroke-linecap="round"/></svg>
<span style="left:714.00px;top:334px;font-size:9.6px;line-height:14px;color:#e2e2e2;letter-spacing:0.125px;">Layer 31 - MCH</span>
<svg style="left:837.9px;top:333.38px;" width="12.6" height="12.6" viewBox="0 0 12 12"><path d="M6 0.9 L7.5 4.3 L11.2 4.7 L8.4 7.2 L9.2 10.9 L6 9 L2.8 10.9 L3.6 7.2 L0.8 4.7 L4.5 4.3 Z" fill="none" stroke="#e8e8e8" stroke-width="1.05" stroke-linejoin="round"/></svg>
<svg style="left:821.5px;top:336.78px;" width="13" height="8" viewBox="0 0 13 8"><path d="M1.2 2 C3.5 6.3 9.5 6.3 11.8 2" fill="none" stroke="#bdbdbd" stroke-width="1" stroke-linecap="round"/></svg>
<span style="left:714.00px;top:353px;font-size:9.6px;line-height:14px;color:#e2e2e2;letter-spacing:0.149px;">Layer 32 - TGT</span>
<svg style="left:837.9px;top:351.69000000000005px;" width="12.6" height="12.6" viewBox="0 0 12 12"><path d="M6 0.9 L7.5 4.3 L11.2 4.7 L8.4 7.2 L9.2 10.9 L6 9 L2.8 10.9 L3.6 7.2 L0.8 4.7 L4.5 4.3 Z" fill="none" stroke="#e8e8e8" stroke-width="1.05" stroke-linejoin="round"/></svg>
<svg style="left:821.5px;top:355.09000000000003px;" width="13" height="8" viewBox="0 0 13 8"><path d="M1.2 2 C3.5 6.3 9.5 6.3 11.8 2" fill="none" stroke="#bdbdbd" stroke-width="1" stroke-linecap="round"/></svg>
<span style="left:714.00px;top:371px;font-size:9.6px;line-height:14px;color:#e2e2e2;letter-spacing:-0.010px;">Primary</span>
<svg style="left:837.9px;top:370.0px;" width="12.6" height="12.6" viewBox="0 0 12 12"><path d="M6 0.9 L7.5 4.3 L11.2 4.7 L8.4 7.2 L9.2 10.9 L6 9 L2.8 10.9 L3.6 7.2 L0.8 4.7 L4.5 4.3 Z" fill="none" stroke="#e8e8e8" stroke-width="1.05" stroke-linejoin="round"/></svg>
<svg style="left:821.5px;top:373.4px;" width="13" height="8" viewBox="0 0 13 8"><path d="M1.2 2 C3.5 6.3 9.5 6.3 11.8 2" fill="none" stroke="#bdbdbd" stroke-width="1" stroke-linecap="round"/></svg>
<span style="left:714.00px;top:389px;font-size:9.6px;line-height:14px;color:#e2e2e2;letter-spacing:0.067px;">Secondary</span>
<svg style="left:837.9px;top:388.31000000000006px;" width="12.6" height="12.6" viewBox="0 0 12 12"><path d="M6 0.9 L7.5 4.3 L11.2 4.7 L8.4 7.2 L9.2 10.9 L6 9 L2.8 10.9 L3.6 7.2 L0.8 4.7 L4.5 4.3 Z" fill="none" stroke="#e8e8e8" stroke-width="1.05" stroke-linejoin="round"/></svg>
<svg style="left:821.5px;top:391.71000000000004px;" width="13" height="8" viewBox="0 0 13 8"><path d="M1.2 2 C3.5 6.3 9.5 6.3 11.8 2" fill="none" stroke="#bdbdbd" stroke-width="1" stroke-linecap="round"/></svg>
<span style="left:714.00px;top:407px;font-size:9.6px;line-height:14px;color:#e2e2e2;letter-spacing:-0.383px;">FK</span>
<svg style="left:837.9px;top:406.62px;" width="12.6" height="12.6" viewBox="0 0 12 12"><path d="M6 0.9 L7.5 4.3 L11.2 4.7 L8.4 7.2 L9.2 10.9 L6 9 L2.8 10.9 L3.6 7.2 L0.8 4.7 L4.5 4.3 Z" fill="none" stroke="#e8e8e8" stroke-width="1.05" stroke-linejoin="round"/></svg>
<svg style="left:821.5px;top:410.02px;" width="13" height="8" viewBox="0 0 13 8"><path d="M1.2 2 C3.5 6.3 9.5 6.3 11.8 2" fill="none" stroke="#bdbdbd" stroke-width="1" stroke-linecap="round"/></svg>
<svg style="left:809px;top:410.32px;" width="6" height="6" viewBox="0 0 6 6"><circle cx="2.7" cy="2.7" r="2.3" fill="#f0f0f0"/></svg>
<span style="left:714.00px;top:426px;font-size:9.6px;line-height:14px;color:#e2e2e2;letter-spacing:0.013px;">Stretch</span>
<svg style="left:837.9px;top:424.93px;" width="12.6" height="12.6" viewBox="0 0 12 12"><path d="M6 0.9 L7.5 4.3 L11.2 4.7 L8.4 7.2 L9.2 10.9 L6 9 L2.8 10.9 L3.6 7.2 L0.8 4.7 L4.5 4.3 Z" fill="none" stroke="#e8e8e8" stroke-width="1.05" stroke-linejoin="round"/></svg>
<svg style="left:821.5px;top:428.33px;" width="13" height="8" viewBox="0 0 13 8"><path d="M1.2 2 C3.5 6.3 9.5 6.3 11.8 2" fill="none" stroke="#bdbdbd" stroke-width="1" stroke-linecap="round"/></svg>
<span style="left:714.00px;top:444px;font-size:9.6px;line-height:14px;color:#e2e2e2;letter-spacing:0.018px;">Ctrl Bones</span>
<svg style="left:837.9px;top:443.24px;" width="12.6" height="12.6" viewBox="0 0 12 12"><path d="M6 0.9 L7.5 4.3 L11.2 4.7 L8.4 7.2 L9.2 10.9 L6 9 L2.8 10.9 L3.6 7.2 L0.8 4.7 L4.5 4.3 Z" fill="none" stroke="#e8e8e8" stroke-width="1.05" stroke-linejoin="round"/></svg>
<svg style="left:821.5px;top:446.64px;" width="13" height="8" viewBox="0 0 13 8"><path d="M1.2 2 C3.5 6.3 9.5 6.3 11.8 2" fill="none" stroke="#bdbdbd" stroke-width="1" stroke-linecap="round"/></svg>
<div style="left:865px;top:181px;width:15px;height:14.5px;background:#545454;border-radius:3px 3px 0 0;"></div>
<svg style="left:867.5px;top:183.2px;" width="10" height="10" viewBox="0 0 10 10"><path d="M5 1.2V8.8M1.2 5H8.8" stroke="#e8e8e8" stroke-width="1.1"/></svg>
<div style="left:865px;top:196px;width:15px;height:15.5px;background:#454545;border-radius:0 0 3px 3px;"></div>
<svg style="left:867.5px;top:198.8px;" width="10" height="10" viewBox="0 0 10 10"><path d="M1.8 5H8.2" stroke="#6a6a6a" stroke-width="1.1"/></svg>
<div style="left:865px;top:219.3px;width:15px;height:14.5px;background:#1d1d1d;border-radius:3px;"></div>
<svg style="left:868.5px;top:222.5px;" width="8" height="8" viewBox="0 0 8 8"><path d="M1 2.5 L4 5.5 L7 2.5" fill="none" stroke="#e8e8e8" stroke-width="1.2" stroke-linecap="round" stroke-linejoin="round"/></svg>
<div style="left:698px;top:467px;width:86.8px;height:16.2px;background:#545454;border-radius:3px;"></div>
<div style="left:741px;top:467px;width:1px;height:16.2px;background:#3d3d3d;border-radius:0px;"></div>
<span style="left:704.75px;top:469px;font-size:9.6px;line-height:14px;color:#ececec;letter-spacing:0.114px;">Assign</span>
<span style="left:745.50px;top:469px;font-size:9.6px;line-height:14px;color:#ececec;letter-spacing:-0.125px;">Remove</span>
<div style="left:793.3px;top:467px;width:86.7px;height:16.2px;background:#454545;border-radius:3px;"></div>
<div style="left:836px;top:467px;width:1px;height:16.2px;background:#3a3a3a;border-radius:0px;"></div>
<span style="left:801.00px;top:469px;font-size:9.6px;line-height:14px;color:#7e7e7e;letter-spacing:0.053px;">Select</span>
<span style="left:838.75px;top:469px;font-size:9.6px;line-height:14px;color:#7e7e7e;letter-spacing:0.144px;">Deselect</span>
<div style="left:690.3px;top:492.1px;width:196.5px;height:20.4px;background:#393939;border-radius:4px;"></div>
<svg style="left:697px;top:498.5px;" width="8" height="8" viewBox="0 0 8 8"><path d="M2.5 1 L5.5 4 L2.5 7" fill="none" stroke="#d8d8d8" stroke-width="1.1" stroke-linecap="round" stroke-linejoin="round"/></svg>
<span style="left:708.40px;top:497px;font-size:9.6px;line-height:14px;color:#e6e6e6;letter-spacing:0.081px;">Motion Paths</span>
<svg style="left:872px;top:500px;" width="11.6" height="6.4" viewBox="0 0 11.6 6.4"><rect x="0.00" y="0.00" width="1.1" height="1.1" fill="#5a5a5a"/><rect x="0.00" y="2.20" width="1.1" height="1.1" fill="#5a5a5a"/><rect x="2.40" y="0.00" width="1.1" height="1.1" fill="#5a5a5a"/><rect x="2.40" y="2.20" width="1.1" height="1.1" fill="#5a5a5a"/><rect x="4.80" y="0.00" width="1.1" height="1.1" fill="#5a5a5a"/><rect x="4.80" y="2.20" width="1.1" height="1.1" fill="#5a5a5a"/><rect x="7.20" y="0.00" width="1.1" height="1.1" fill="#5a5a5a"/><rect x="7.20" y="2.20" width="1.1" height="1.1" fill="#5a5a5a"/></svg>
<div style="left:690.3px;top:515px;width:196.5px;height:60px;background:#393939;border-radius:4px;"></div>
<svg style="left:696.5px;top:522.5px;" width="8" height="8" viewBox="0 0 8 8"><path d="M1 2.5 L4 5.5 L7 2.5" fill="none" stroke="#d8d8d8" stroke-width="1.1" stroke-linecap="round" stroke-linejoin="round"/></svg>
<span style="left:708.40px;top:520px;font-size:9.6px;line-height:14px;color:#e6e6e6;letter-spacing:0.105px;">Viewport Display</span>
<svg style="left:872px;top:523px;" width="11.6" height="6.4" viewBox="0 0 11.6 6.4"><rect x="0.00" y="0.00" width="1.1" height="1.1" fill="#5a5a5a"/><rect x="0.00" y="2.20" width="1.1" height="1.1" fill="#5a5a5a"/><rect x="2.40" y="0.00" width="1.1" height="1.1" fill="#5a5a5a"/><rect x="2.40" y="2.20" width="1.1" height="1.1" fill="#5a5a5a"/><rect x="4.80" y="0.00" width="1.1" height="1.1" fill="#5a5a5a"/><rect x="4.80" y="2.20" width="1.1" height="1.1" fill="#5a5a5a"/><rect x="7.20" y="0.00" width="1.1" height="1.1" fill="#5a5a5a"/><rect x="7.20" y="2.20" width="1.1" height="1.1" fill="#5a5a5a"/></svg>
<span style="left:714.70px;top:544px;font-size:9.6px;line-height:14px;color:#e2e2e2;letter-spacing:0.018px;">Display As</span>
<div style="left:768.2px;top:542.2px;width:94.8px;height:14.8px;background:#1d1d1d;border-radius:3px;"></div>
<span style="left:773.50px;top:544px;font-size:9.6px;line-height:14px;color:#e6e6e6;letter-spacing:0.163px;">B-Bone</span>
<svg style="left:854.5px;top:546.5px;" width="7.0" height="7.0" viewBox="0 0 7.0 7.0"><path d="M1 2.25 L3.5 4.75 L6.0 2.25" fill="none" stroke="#dcdcdc" stroke-width="1.05" stroke-linecap="round" stroke-linejoin="round"/></svg>
<svg style="left:870px;top:547px;" width="6" height="6" viewBox="0 0 6 6"><circle cx="2.7" cy="2.7" r="2" fill="#e0e0e0"/></svg>
<div style="left:889.4px;top:46px;width:3px;height:314px;background:#404040;border-radius:1.5px;"></div>
<div style="left:896px;top:18px;width:109px;height:547px;background:#282828;border-radius:6px 0 0 0;"></div>
<div style="left:896px;top:55.8px;width:109px;height:15.8px;background:#2b2b2b;border-radius:0px;"></div>
<div style="left:896px;top:87.4px;width:109px;height:15.8px;background:#2b2b2b;border-radius:0px;"></div>
<div style="left:896px;top:119.0px;width:109px;height:15.8px;background:#2b2b2b;border-radius:0px;"></div>
<div style="left:896px;top:150.60000000000002px;width:109px;height:15.8px;background:#2b2b2b;border-radius:0px;"></div>
<div style="left:896px;top:182.20000000000002px;width:109px;height:15.8px;background:#2b2b2b;border-radius:0px;"></div>
<div style="left:896px;top:213.8px;width:109px;height:15.8px;background:#2b2b2b;border-radius:0px;"></div>
<div style="left:896px;top:245.4px;width:109px;height:15.8px;background:#2b2b2b;border-radius:0px;"></div>
<div style="left:896px;top:277.0px;width:109px;height:15.8px;background:#2b2b2b;border-radius:0px;"></div>
<div style="left:896px;top:308.6px;width:109px;height:15.8px;background:#2b2b2b;border-radius:0px;"></div>
<div style="left:896px;top:340.2px;width:109px;height:15.8px;background:#2b2b2b;border-radius:0px;"></div>
<div style="left:896px;top:371.8px;width:109px;height:15.8px;background:#2b2b2b;border-radius:0px;"></div>
<div style="left:896px;top:403.40000000000003px;width:109px;height:15.8px;background:#2b2b2b;border-radius:0px;"></div>
<div style="left:896px;top:435.0px;width:109px;height:15.8px;background:#2b2b2b;border-radius:0px;"></div>
<div style="left:896px;top:466.6px;width:109px;height:15.8px;background:#2b2b2b;border-radius:0px;"></div>
<div style="left:896px;top:498.20000000000005px;width:109px;height:15.8px;background:#2b2b2b;border-radius:0px;"></div>
<div style="left:896px;top:529.8px;width:109px;height:15.8px;background:#2b2b2b;border-radius:0px;"></div>
<div style="left:896px;top:561.4px;width:109px;height:15.8px;background:#2b2b2b;border-radius:0px;"></div>
<div style="left:896px;top:593.0px;width:109px;height:15.8px;background:#2b2b2b;border-radius:0px;"></div>
<div style="left:896px;top:624.6px;width:109px;height:15.8px;background:#2b2b2b;border-radius:0px;"></div>
<div style="left:896px;top:656.2px;width:109px;height:15.8px;background:#2b2b2b;border-radius:0px;"></div>
<div style="left:902.4px;top:20.9px;width:24.6px;height:14.5px;background:#262626;border-radius:3px;border:1px solid #3a3a3a;"></div>
<svg style="left:918.8px;top:25.8px;" width="6.4" height="6.4" viewBox="0 0 6.4 6.4"><path d="M1 2.1 L3.2 4.300000000000001 L5.4 2.1" fill="none" stroke="#dcdcdc" stroke-width="1.05" stroke-linecap="round" stroke-linejoin="round"/></svg>
<div style="left:931.6px;top:20.9px;width:23.6px;height:14.5px;background:#262626;border-radius:3px;border:1px solid #3a3a3a;"></div>
<svg style="left:948.0999999999999px;top:25.8px;" width="6.4" height="6.4" viewBox="0 0 6.4 6.4"><path d="M1 2.1 L3.2 4.300000000000001 L5.4 2.1" fill="none" stroke="#dcdcdc" stroke-width="1.05" stroke-linecap="round" stroke-linejoin="round"/></svg>
<div style="left:969.8px;top:20.9px;width:40px;height:14.5px;background:#1d1d1d;border-radius:3px;border:1px solid #3a3a3a;"></div>
<span style="left:990.00px;top:23px;font-size:9.6px;line-height:14px;color:#6a6a6a;letter-spacing:-0.519px;">Search</span>
<div style="left:895.7px;top:134.4px;width:110px;height:15.7px;background:#2f4e86;border-radius:0px;"></div>
<svg style="left:914px;top:42.599999999999994px;" width="10.4" height="10.4" viewBox="0 0 11 11"><rect x="0.2" y="0.5" width="10.6" height="2.7" fill="#e6e6e6"/><path d="M1 4.1H10V10.5H1Z M4 5.5V7H7V5.5Z" fill="#e6e6e6" fill-rule="evenodd"/></svg>
<span style="left:930.70px;top:42px;font-size:9.6px;line-height:14px;color:#dadada;letter-spacing:-0.290px;">Scene Collecti</span>
<svg style="left:914.8px;top:59.9px;" width="8.2" height="8.2" viewBox="0 0 8.2 8.2"><path d="M1 2.55 L4.1 5.65 L7.2 2.55" fill="none" stroke="#cfcfcf" stroke-width="1.1" stroke-linecap="round" stroke-linejoin="round"/></svg>
<div style="left:927.5px;top:56.4px;width:15.5px;height:13.3px;background:#484848;border-radius:3px;border:1px solid #8a8a8a;"></div>
<svg style="left:930px;top:57.9px;" width="10.4" height="10.4" viewBox="0 0 11 11"><rect x="0.2" y="0.5" width="10.6" height="2.7" fill="#e6e6e6"/><path d="M1 4.1H10V10.5H1Z M4 5.5V7H7V5.5Z" fill="#e6e6e6" fill-rule="evenodd"/></svg>
<span style="left:946.30px;top:58px;font-size:9.6px;line-height:14px;color:#dadada;letter-spacing:-0.261px;">CH-Soldie</span>
<div style="left:992.5px;top:59.3px;width:8.2px;height:8px;background:#f4f4f4;border-radius:1.5px;"></div>
<svg style="left:992.5px;top:59.3px;" width="8.2" height="8" viewBox="0 0 8.2 8"><path d="M1.7 4.1 L3.4 5.9 L6.6 2.1" fill="none" stroke="#1a1a1a" stroke-width="1.5"/></svg>
<div style="left:918.5px;top:74.9px;width:0.9px;height:70.3px;background:#4c4c4c;border-radius:0px;"></div>
<svg style="left:931.4px;top:75.9px;" width="8.2" height="8.2" viewBox="0 0 8.2 8.2"><path d="M2.55 1 L5.65 4.1 L2.55 7.2" fill="none" stroke="#cfcfcf" stroke-width="1.1" stroke-linecap="round" stroke-linejoin="round"/></svg>
<svg style="left:945.9px;top:74.3px;" width="10.4" height="10.4" viewBox="0 0 11 11"><rect x="0.2" y="0.5" width="10.6" height="2.7" fill="#e6e6e6"/><path d="M1 4.1H10V10.5H1Z M4 5.5V7H7V5.5Z" fill="#e6e6e6" fill-rule="evenodd"/></svg>
<span style="left:962.20px;top:74px;font-size:9.6px;line-height:14px;color:#dadada;letter-spacing:-0.267px;">Armor</span>
<div style="left:992.5px;top:75.2px;width:8.2px;height:8px;background:#f4f4f4;border-radius:1.5px;"></div>
<svg style="left:992.5px;top:75.2px;" width="8.2" height="8" viewBox="0 0 8.2 8"><path d="M1.7 4.1 L3.4 5.9 L6.6 2.1" fill="none" stroke="#1a1a1a" stroke-width="1.5"/></svg>
<svg style="left:931.1999999999999px;top:91.7px;" width="8.2" height="8.2" viewBox="0 0 8.2 8.2"><path d="M2.55 1 L5.65 4.1 L2.55 7.2" fill="none" stroke="#6a6a6a" stroke-width="1.1" stroke-linecap="round" stroke-linejoin="round"/></svg>
<svg style="left:945.6px;top:90.1px;" width="11" height="11" viewBox="0 0 11 11"><path d="M1.3 1.4H9.3L5.3 9.4Z" fill="none" stroke="#e58f3c" stroke-width="1.8" stroke-linejoin="round"/></svg>
<span style="left:962.60px;top:90px;font-size:9.6px;line-height:14px;color:#777777;letter-spacing:-0.757px;">BaseS</span>
<svg style="left:931.1999999999999px;top:107.5px;" width="8.2" height="8.2" viewBox="0 0 8.2 8.2"><path d="M2.55 1 L5.65 4.1 L2.55 7.2" fill="none" stroke="#6a6a6a" stroke-width="1.1" stroke-linecap="round" stroke-linejoin="round"/></svg>
<svg style="left:945.6px;top:105.89999999999999px;" width="11" height="11" viewBox="0 0 11 11"><path d="M1.3 1.4H9.3L5.3 9.4Z" fill="none" stroke="#e58f3c" stroke-width="1.8" stroke-linejoin="round"/></svg>
<span style="left:962.60px;top:106px;font-size:9.6px;line-height:14px;color:#777777;letter-spacing:-0.757px;">BaseS</span>
<svg style="left:931.1999999999999px;top:123.3px;" width="8.2" height="8.2" viewBox="0 0 8.2 8.2"><path d="M2.55 1 L5.65 4.1 L2.55 7.2" fill="none" stroke="#6a6a6a" stroke-width="1.1" stroke-linecap="round" stroke-linejoin="round"/></svg>
<svg style="left:945.6px;top:121.69999999999999px;" width="11" height="11" viewBox="0 0 11 11"><path d="M1.3 1.4H9.3L5.3 9.4Z" fill="none" stroke="#e58f3c" stroke-width="1.8" stroke-linejoin="round"/></svg>
<span style="left:962.60px;top:122px;font-size:9.6px;line-height:14px;color:#777777;letter-spacing:-0.757px;">BaseS</span>
<svg style="left:931.1999999999999px;top:139.1px;" width="8.2" height="8.2" viewBox="0 0 8.2 8.2"><path d="M2.55 1 L5.65 4.1 L2.55 7.2" fill="none" stroke="#ececec" stroke-width="1.1" stroke-linecap="round" stroke-linejoin="round"/></svg>
<div style="left:943px;top:135.4px;width:15.9px;height:13.5px;background:#5b7096;border-radius:3.5px;border:1px solid #7f92b6;"></div>
<span style="left:962.30px;top:137px;font-size:9.6px;line-height:14px;color:#f2a83e;letter-spacing:-0.148px;">Soldie</span>
<svg style="left:915.6999999999999px;top:154.9px;" width="8.2" height="8.2" viewBox="0 0 8.2 8.2"><path d="M2.55 1 L5.65 4.1 L2.55 7.2" fill="none" stroke="#8a8a8a" stroke-width="1.1" stroke-linecap="round" stroke-linejoin="round"/></svg>
<svg style="left:929.9px;top:153.20000000000002px;" width="10.4" height="10.4" viewBox="0 0 11 11"><rect x="0.2" y="0.5" width="10.6" height="2.7" fill="#8c8c8c"/><path d="M1 4.1H10V10.5H1Z M4 5.5V7H7V5.5Z" fill="#8c8c8c" fill-rule="evenodd"/></svg>
<span style="left:946.50px;top:153px;font-size:9.6px;line-height:14px;color:#8a8a8a;letter-spacing:-0.056px;">Collection</span>
<div style="left:992.7px;top:154.1px;width:8.2px;height:8px;background:#f4f4f4;border-radius:1.5px;"></div>
<svg style="left:992.7px;top:154.1px;" width="8.2" height="8" viewBox="0 0 8.2 8"><path d="M1.7 4.1 L3.4 5.9 L6.6 2.1" fill="none" stroke="#1a1a1a" stroke-width="1.5"/></svg>
<svg style="left:915.6999999999999px;top:170.70000000000002px;" width="8.2" height="8.2" viewBox="0 0 8.2 8.2"><path d="M2.55 1 L5.65 4.1 L2.55 7.2" fill="none" stroke="#8a8a8a" stroke-width="1.1" stroke-linecap="round" stroke-linejoin="round"/></svg>
<svg style="left:929.9px;top:169.10000000000002px;" width="10.4" height="10.4" viewBox="0 0 11 11"><rect x="0.2" y="0.5" width="10.6" height="2.7" fill="#8c8c8c"/><path d="M1 4.1H10V10.5H1Z M4 5.5V7H7V5.5Z" fill="#8c8c8c" fill-rule="evenodd"/></svg>
<span style="left:946.50px;top:169px;font-size:9.6px;line-height:14px;color:#8a8a8a;letter-spacing:-0.999px;">WGTS</span>
<div style="left:992.7px;top:170px;width:8.2px;height:8px;background:#f4f4f4;border-radius:1.5px;"></div>
<svg style="left:992.7px;top:170px;" width="8.2" height="8" viewBox="0 0 8.2 8"><path d="M1.7 4.1 L3.4 5.9 L6.6 2.1" fill="none" stroke="#1a1a1a" stroke-width="1.5"/></svg>
<div style="left:0px;top:503.9px;width:660px;height:62px;background:#1d1d1d;border-radius:0 6px 0 0;"></div>
<div style="left:0px;top:503.9px;width:660px;height:20.8px;background:#2b2b2b;border-radius:0 6px 0 0;"></div>
<div style="left:1.9px;top:507.6px;width:101.3px;height:13.9px;background:#242424;border-radius:3px;border:1px solid #3a3a3a;"></div>
<span style="left:21.70px;top:509px;font-size:9.6px;line-height:14px;color:#e4e4e4;letter-spacing:-0.086px;">Action Editor</span>
<svg style="left:94.89999999999999px;top:511.9px;" width="6.8" height="6.8" viewBox="0 0 6.8 6.8"><path d="M1 2.2 L3.4 4.6 L5.8 2.2" fill="none" stroke="#dcdcdc" stroke-width="1.05" stroke-linecap="round" stroke-linejoin="round"/></svg>
<span style="left:113.60px;top:509px;font-size:9.6px;line-height:14px;color:#d4d4d4;letter-spacing:-0.334px;">View</span>
<span style="left:145.00px;top:509px;font-size:9.6px;line-height:14px;color:#d4d4d4;letter-spacing:-0.280px;">Select</span>
<span style="left:182.00px;top:509px;font-size:9.6px;line-height:14px;color:#d4d4d4;letter-spacing:-0.228px;">Marker</span>
<span style="left:222.00px;top:509px;font-size:9.6px;line-height:14px;color:#d4d4d4;letter-spacing:-0.394px;">Channel</span>
<span style="left:267.00px;top:509px;font-size:9.6px;line-height:14px;color:#d4d4d4;letter-spacing:-0.514px;">Key</span>
<div style="left:292.9px;top:507.6px;width:30.9px;height:13.9px;background:#424242;border-radius:3px;"></div>
<div style="left:292.9px;top:507.6px;width:15.4px;height:13.9px;background:#565656;border-radius:3px 0 0 3px;"></div>
<svg style="left:296px;top:510.6px;" width="9" height="8" viewBox="0 0 9 8"><path d="M1.2 1.4H7.8L4.5 6.6Z" fill="#f4f4f4"/></svg>
<svg style="left:311.6px;top:510.6px;" width="9" height="8" viewBox="0 0 9 8"><path d="M1.2 6.4H7.8L4.5 1.4Z" fill="#6c6c6c"/></svg>
<div style="left:328.9px;top:507.6px;width:124px;height:13.9px;background:#464646;border-radius:3px;"></div>
<div style="left:401.1px;top:507.6px;width:0.8px;height:13.9px;background:#2e2e2e;border-radius:0px;"></div>
<span style="left:348.90px;top:509px;font-size:9.6px;line-height:14px;color:#dedede;letter-spacing:-0.332px;">Push Down</span>
<span style="left:423.00px;top:509px;font-size:9.6px;line-height:14px;color:#dedede;letter-spacing:-0.309px;">Stash</span>
<svg style="left:331px;top:508px;" width="14" height="13" viewBox="0 0 14 13"><path d="M4.2 1.6H9.6L6.9 5.2Z" fill="#ececec"/><path d="M3.4 6.6H11.4V8.8H3.4Z M1.6 9.9H9.6V12H1.6Z" fill="none" stroke="#d8d8d8" stroke-width="0.9"/></svg>
<svg style="left:404.7px;top:508.9px;" width="12" height="12" viewBox="0 0 12 12"><g transform="translate(6,6)" stroke="#ececec" stroke-width="1" stroke-linecap="round" fill="none"><path d="M0 -5V5M-4.3 -2.5L4.3 2.5M-4.3 2.5L4.3 -2.5"/><path d="M-1.3 -4L0 -2.9L1.3 -4M-1.3 4L0 2.9L1.3 4M-4.1 -0.9L-2.5 -1.5L-2.9 -3.1M4.1 0.9L2.5 1.5L2.9 3.1M-4.1 0.9L-2.5 1.5L-2.9 3.1M4.1 -0.9L2.5 -1.5L2.9 -3.1" stroke-width="0.7"/></g></svg>
<div style="left:467.2px;top:507.6px;width:166.2px;height:13.9px;background:#262626;border-radius:3px;"></div>
<div style="left:491px;top:507.6px;width:94.4px;height:13.9px;background:#1a1a1a;border-radius:0px;"></div>
<div style="left:585.4px;top:507.6px;width:48px;height:13.9px;background:#484848;border-radius:0 3px 3px 0;"></div>
<div style="left:601.5px;top:507.6px;width:0.7px;height:13.9px;background:#333;border-radius:0px;"></div>
<div style="left:617.4px;top:507.6px;width:0.7px;height:13.9px;background:#333;border-radius:0px;"></div>
<span style="left:497.60px;top:509px;font-size:9.6px;line-height:14px;color:#dedede;letter-spacing:-0.180px;">Action</span>
<svg style="left:468px;top:507px;" width="16" height="14" viewBox="468 507 16 14"><path d="M471.2 509.2L473 511L471.2 512.8L469.4 511Z M480.1 509.2L481.9 511L480.1 512.8L478.3 511Z" fill="#f0f0f0"/><rect x="473.7" y="509.9" width="3.9" height="2.3" fill="#c8c8c8"/><path d="M475.5 514.7L478.1 517.3L475.5 519.9L472.9 517.3Z" fill="none" stroke="#ececec" stroke-width="1"/></svg>
<svg style="left:482.8px;top:512.0999999999999px;" width="6.4" height="6.4" viewBox="0 0 6.4 6.4"><path d="M1 2.1 L3.2 4.300000000000001 L5.4 2.1" fill="none" stroke="#dcdcdc" stroke-width="1.05" stroke-linecap="round" stroke-linejoin="round"/></svg>
<div style="left:647.4px;top:507.6px;width:13px;height:13.9px;background:#555555;border-radius:3px 0 0 3px;"></div>
<svg style="left:649px;top:508.4px;" width="12" height="12" viewBox="0 0 12 12"><path d="M1.6 1.4L10.4 5.4L6.4 6.6L5 10.8Z" fill="#f4f4f4"/></svg>
<div style="left:0px;top:526.6px;width:148px;height:13px;background:#1a1a1a;border-radius:0 3px 3px 0;border:1px solid #2e2e2e;border-left:none;"></div>
<span style="left:0.00px;top:528px;font-size:9.6px;line-height:14px;color:#5c5c5c;letter-spacing:-0.794px;">arch</span>
<div style="left:148.3px;top:526.7px;width:18px;height:12.7px;background:#555555;border-radius:3px;"></div>
<svg style="left:151.3px;top:529px;" width="12" height="8" viewBox="0 0 12 8"><path d="M1.2 4H10.8M3.6 1.6L1.2 4L3.6 6.4M8.4 1.6L10.8 4L8.4 6.4" fill="none" stroke="#f0f0f0" stroke-width="1.1" stroke-linecap="round" stroke-linejoin="round"/></svg>
<span style="left:188.83px;top:528px;font-size:9.6px;line-height:14px;color:#b8b8b8;">-1</span>
<span style="left:292.03px;top:528px;font-size:9.6px;line-height:14px;color:#b8b8b8;">1</span>
<span style="left:342.23px;top:528px;font-size:9.6px;line-height:14px;color:#b8b8b8;">2</span>
<span style="left:392.73px;top:528px;font-size:9.6px;line-height:14px;color:#b8b8b8;">3</span>
<span style="left:444.23px;top:528px;font-size:9.6px;line-height:14px;color:#b8b8b8;">4</span>
<div style="left:234.2px;top:526.7px;width:19.9px;height:12.8px;background:#4772b3;border-radius:3px;"></div>
<span style="left:241.53px;top:528px;font-size:9.6px;line-height:14px;color:#ffffff;">0</span>
<div style="left:0px;top:542.9px;width:486.5px;height:5.3px;background:#3c2124;border-radius:0px;"></div>
<div style="left:0px;top:542.9px;width:168px;height:5.3px;background:#5c262a;border-radius:0px;"></div>
<div style="left:192.7px;top:542.9px;width:0.8px;height:5.3px;background:#4a2a2d;border-radius:0px;"></div>
<div style="left:294.3px;top:542.9px;width:0.8px;height:5.3px;background:#4a2a2d;border-radius:0px;"></div>
<div style="left:344.5px;top:542.9px;width:0.8px;height:5.3px;background:#4a2a2d;border-radius:0px;"></div>
<div style="left:395.0px;top:542.9px;width:0.8px;height:5.3px;background:#4a2a2d;border-radius:0px;"></div>
<div style="left:446.5px;top:542.9px;width:0.8px;height:5.3px;background:#4a2a2d;border-radius:0px;"></div>
<div style="left:243.7px;top:544.5px;width:1.2px;height:3.7px;background:#5a8ee0;border-radius:0px;"></div>
<div style="left:202.5px;top:540.3px;width:66.4px;height:5.2px;background:#5c5c5c;border-radius:2.6px;"></div>
<svg style="left:200.5px;top:539.9px;" width="6" height="6" viewBox="0 0 6 6"><circle cx="3" cy="3" r="2.1" fill="#202020" stroke="#707070" stroke-width="0.9"/></svg>
<svg style="left:264.9px;top:539.9px;" width="6" height="6" viewBox="0 0 6 6"><circle cx="3" cy="3" r="2.1" fill="#202020" stroke="#707070" stroke-width="0.9"/></svg>
<div style="left:483.2px;top:531px;width:1.6px;height:16px;background:#4a4a4a;border-radius:1px;"></div>
<div style="left:488.5px;top:524.7px;width:171.5px;height:25px;background:#232323;border-radius:0px;"></div>
<div style="left:492.8px;top:525.6px;width:161.7px;height:22px;background:#383838;border-radius:4px;"></div>
<svg style="left:498.3px;top:532.6px;" width="8" height="8" viewBox="0 0 8 8"><path d="M1 2.5 L4 5.5 L7 2.5" fill="none" stroke="#d8d8d8" stroke-width="1.1" stroke-linecap="round" stroke-linejoin="round"/></svg>
<span style="left:510.80px;top:530px;font-size:9.6px;line-height:14px;color:#e6e6e6;letter-spacing:-0.147px;">Action</span>
<svg style="left:640px;top:533.2px;" width="11.6" height="6.4" viewBox="0 0 11.6 6.4"><rect x="0.00" y="0.00" width="1.1" height="1.1" fill="#5a5a5a"/><rect x="0.00" y="2.20" width="1.1" height="1.1" fill="#5a5a5a"/><rect x="2.40" y="0.00" width="1.1" height="1.1" fill="#5a5a5a"/><rect x="2.40" y="2.20" width="1.1" height="1.1" fill="#5a5a5a"/><rect x="4.80" y="0.00" width="1.1" height="1.1" fill="#5a5a5a"/><rect x="4.80" y="2.20" width="1.1" height="1.1" fill="#5a5a5a"/><rect x="7.20" y="0.00" width="1.1" height="1.1" fill="#5a5a5a"/><rect x="7.20" y="2.20" width="1.1" height="1.1" fill="#5a5a5a"/></svg>
<div style="left:655.6px;top:526px;width:1.6px;height:20px;background:#4a4a4a;border-radius:1px;"></div>
<div style="left:0px;top:548.2px;width:660px;height:1.8px;background:#181818;border-radius:0px;"></div>
<div style="left:0px;top:550px;width:660px;height:15px;background:#2b2b2b;border-radius:0px;"></div>
<div style="left:1.9px;top:552.6px;width:55px;height:14px;background:#242424;border-radius:3px 0 0 3px;border:1px solid #3a3a3a;"></div>
<span style="left:7.80px;top:555px;font-size:9.6px;line-height:14px;color:#e4e4e4;letter-spacing:-0.319px;">Playback</span>
<svg style="left:49.5px;top:557.7px;" width="6.6" height="6.6" viewBox="0 0 6.6 6.6"><path d="M1 2.15 L3.3 4.449999999999999 L5.6 2.15" fill="none" stroke="#dcdcdc" stroke-width="1.05" stroke-linecap="round" stroke-linejoin="round"/></svg>
<div style="left:57.5px;top:552.6px;width:46.6px;height:14px;background:#242424;border-radius:0 3px 3px 0;border:1px solid #3a3a3a;"></div>
<span style="left:63.60px;top:555px;font-size:9.6px;line-height:14px;color:#e4e4e4;letter-spacing:-0.392px;">Keying</span>
<svg style="left:97.0px;top:557.7px;" width="6.6" height="6.6" viewBox="0 0 6.6 6.6"><path d="M1 2.15 L3.3 4.449999999999999 L5.6 2.15" fill="none" stroke="#dcdcdc" stroke-width="1.05" stroke-linecap="round" stroke-linejoin="round"/></svg>
<span style="left:112.50px;top:555px;font-size:9.6px;line-height:14px;color:#d4d4d4;letter-spacing:-0.334px;">View</span>
<span style="left:144.00px;top:555px;font-size:9.6px;line-height:14px;color:#d4d4d4;letter-spacing:-0.245px;">Marker</span>
<div style="left:240.7px;top:552.6px;width:29px;height:14px;background:#383838;border-radius:3px;"></div>
<div style="left:240.7px;top:552.6px;width:15.3px;height:14px;background:#464646;border-radius:3px 0 0 3px;"></div>
<svg style="left:243.5px;top:555.6px;" width="10" height="10" viewBox="0 0 10 10"><circle cx="4.9" cy="5" r="3.5" fill="none" stroke="#b0b0b0" stroke-width="1"/></svg>
<svg style="left:259.5px;top:557.9px;" width="6.2" height="6.2" viewBox="0 0 6.2 6.2"><path d="M1 2.05 L3.1 4.15 L5.2 2.05" fill="none" stroke="#5a5a5a" stroke-width="1" stroke-linecap="round" stroke-linejoin="round"/></svg>
<div style="left:276.4px;top:552.6px;width:94.1px;height:14px;background:#4a4a4a;border-radius:3px;"></div>
<svg style="left:276.4px;top:552.6px;" width="15.68" height="12.4" viewBox="0 0 15.68 12.4"><path d="M4.4 3.4V11" stroke="#f2f2f2" stroke-width="1.5"/><path d="M11.6 3.4V11L5.6 7.2Z" fill="#f2f2f2"/></svg>
<svg style="left:292.08px;top:552.6px;" width="15.68" height="12.4" viewBox="0 0 15.68 12.4"><path d="M7.6 3.6L10.6 7.2L7.6 10.8L4.6 7.2Z" fill="#f2f2f2"/><path d="M1.4 7.2L4.2 4.6V9.8Z" fill="#f2f2f2"/><path d="M14.2 4.2V10.2L11 7.2Z" fill="#f2f2f2" transform="translate(0,0)"/></svg>
<svg style="left:307.76px;top:552.6px;" width="15.68" height="12.4" viewBox="0 0 15.68 12.4"><path d="M11.4 3V11.4L4 7.2Z" fill="#f2f2f2"/></svg>
<svg style="left:323.44px;top:552.6px;" width="15.68" height="12.4" viewBox="0 0 15.68 12.4"><path d="M4.4 3V11.4L11.8 7.2Z" fill="#f2f2f2"/></svg>
<svg style="left:339.12px;top:552.6px;" width="15.68" height="12.4" viewBox="0 0 15.68 12.4"><path d="M8.2 3.6L11.2 7.2L8.2 10.8L5.2 7.2Z" fill="#f2f2f2"/><path d="M14.4 7.2L11.6 4.6V9.8Z" fill="#f2f2f2"/><path d="M1.6 4.2V10.2L4.8 7.2Z" fill="#f2f2f2"/></svg>
<svg style="left:354.79999999999995px;top:552.6px;" width="15.68" height="12.4" viewBox="0 0 15.68 12.4"><path d="M11.4 3.4V11" stroke="#f2f2f2" stroke-width="1.5"/><path d="M4.2 3.4V11L10.2 7.2Z" fill="#f2f2f2"/></svg>
<div style="left:439px;top:553.4px;width:57.3px;height:14px;background:#464646;border-radius:3px;"></div>
<span style="left:464.03px;top:555px;font-size:9.6px;line-height:14px;color:#e2e2e2;">0</span>
<div style="left:501.5px;top:553.4px;width:152.2px;height:14px;background:#464646;border-radius:3px;"></div>
<div style="left:501.5px;top:553.4px;width:14.5px;height:14px;background:#3a3a3a;border-radius:3px 0 0 3px;"></div>
<div style="left:585.9px;top:553.4px;width:0.8px;height:14px;background:#2b2b2b;border-radius:0px;"></div>
<svg style="left:503px;top:553.6px;" width="12" height="12" viewBox="0 0 12 12"><circle cx="5.8" cy="7" r="3.9" fill="none" stroke="#e0e0e0" stroke-width="1"/><path d="M5.8 4.8V7.2L7.4 8.2M4.4 1.6H7.2M5.8 1.6V3M9 3.2L10 4.2" fill="none" stroke="#e0e0e0" stroke-width="0.9"/></svg>
<span style="left:528.70px;top:555px;font-size:9.6px;line-height:14px;color:#dedede;letter-spacing:-0.154px;">Start</span>
<span style="left:570.03px;top:555px;font-size:9.6px;line-height:14px;color:#dedede;">0</span>
<span style="left:598.30px;top:555px;font-size:9.6px;line-height:14px;color:#dedede;letter-spacing:-0.427px;">End</span>
<span style="left:632.66px;top:555px;font-size:9.6px;line-height:14px;color:#dedede;">20</span>
<svg style="left:4px;top:508px;" width="14" height="14" viewBox="0 0 14 14"><rect x="3.6" y="3.3" width="6.6" height="6.6" rx="0.6" fill="#e6e6e6"/><path d="M1 4V1H4M9.8 1H12.8V4M12.8 9.2V12.2H9.8M4 12.2H1V9.2" fill="none" stroke="#d4d4d4" stroke-width="1"/></svg>
<svg style="left:733px;top:1px;" width="14" height="14" viewBox="733 1 14 14"><path d="M734.4 11.4L737.6 3.2L740.4 11.4Z" fill="#d8d8d8"/><circle cx="744.1" cy="3.6" r="1.25" fill="#d8d8d8"/><circle cx="742.7" cy="10.3" r="2.3" fill="#242424" stroke="#d8d8d8" stroke-width="0.95"/><path d="M742.7 10.3L744.6 8.8" stroke="#d8d8d8" stroke-width="0.7"/></svg>
<svg style="left:747.7px;top:5.1000000000000005px;" width="6.6" height="6.6" viewBox="0 0 6.6 6.6"><path d="M1 2.15 L3.3 4.449999999999999 L5.6 2.15" fill="none" stroke="#d8d8d8" stroke-width="1.1" stroke-linecap="round" stroke-linejoin="round"/></svg>
<svg style="left:834.6px;top:1px;" width="14" height="14" viewBox="834.6 1 14 14"><g transform="translate(841.6,8) rotate(45) scale(0.92)"><path d="M-2 -5.2H2M-1.5 -5.2V-1.6L-3 0.4H3L1.5 -1.6V-5.2M0 0.4V5" fill="none" stroke="#8c8c8c" stroke-width="1" stroke-linecap="round" stroke-linejoin="round"/></g></svg>
<svg style="left:851.3px;top:1.1999999999999993px;" width="14" height="14" viewBox="851.3 1.1999999999999993 14 14"><path d="M856.5 3.3999999999999995H860.6999999999999L862.9 5.6V10.799999999999999H856.5Z" fill="none" stroke="#e0e0e0" stroke-width="0.95" stroke-linejoin="round"/><path d="M860.5 3.3999999999999995V5.799999999999999H862.9" fill="none" stroke="#e0e0e0" stroke-width="0.8"/><path d="M856.5 5.799999999999999H853.9V13.2H860.0999999999999V10.799999999999999" fill="none" stroke="#e0e0e0" stroke-width="0.95" stroke-linejoin="round"/></svg>
<svg style="left:869.4px;top:3px;" width="10" height="10" viewBox="0 0 10 10"><path d="M2.1 2.1L7.9 7.9M7.9 2.1L2.1 7.9" stroke="#666" stroke-width="1.0" stroke-linecap="round"/></svg>
<svg style="left:889.6px;top:1.6px;" width="14" height="14" viewBox="889.6 1.6 14 14"><path d="M891.1 5.800000000000001V13.2H898.4" fill="none" stroke="#d6d6d6" stroke-width="0.8" opacity="0.7"/><path d="M892.5 4.4V11.799999999999999H899.8000000000001" fill="none" stroke="#d6d6d6" stroke-width="0.8" opacity="0.85"/><rect x="894.0" y="3.0" width="7.4" height="7.4" rx="0.8" fill="#d6d6d6"/><path d="M894.6 9.6L897.2 5.800000000000001L898.8000000000001 8.0L899.6 7.199999999999999L900.8000000000001 9.6Z" fill="#2a2a2a"/><circle cx="899.8000000000001" cy="4.800000000000001" r="0.8" fill="#2a2a2a"/></svg>
<svg style="left:903.2px;top:5.3px;" width="6.6" height="6.6" viewBox="0 0 6.6 6.6"><path d="M1 2.15 L3.3 4.449999999999999 L5.6 2.15" fill="none" stroke="#d8d8d8" stroke-width="1.1" stroke-linecap="round" stroke-linejoin="round"/></svg>
<svg style="left:670px;top:22px;" width="15" height="14" viewBox="670 22 15 14"><rect x="671.4" y="23.4" width="11.6" height="4.9" rx="2.45" fill="#dcdcdc"/><rect x="671.4" y="29.7" width="11.6" height="4.9" rx="2.45" fill="#dcdcdc"/><circle cx="680.4" cy="25.85" r="1.55" fill="#2b2b2b"/><circle cx="674" cy="32.15" r="1.55" fill="#2b2b2b"/></svg>
<svg style="left:733px;top:21.6px;" width="14" height="14" viewBox="733 21.6 14 14"><circle cx="741.2" cy="27.400000000000002" r="3.1" fill="none" stroke="#d0d0d0" stroke-width="1"/><path d="M739.1 29.5L736 32.6" stroke="#d0d0d0" stroke-width="1.1" stroke-linecap="round"/></svg>
<svg style="left:905px;top:22px;" width="13" height="13" viewBox="905 22 13 13"><rect x="906.1" y="23" width="3.4" height="1.9" fill="#dcdcdc"/><path d="M907.2 25V32.4H910.4M907.2 28.6H910.4" fill="none" stroke="#bdbdbd" stroke-width="0.8"/><rect x="911" y="27.6" width="5.6" height="1.9" fill="#dcdcdc"/><rect x="911" y="31.5" width="5.6" height="1.9" fill="#dcdcdc"/></svg>
<svg style="left:934.2px;top:22px;" width="14" height="14" viewBox="934.2 22 14 14"><path d="M935.7 26.2V33.6H943.0" fill="none" stroke="#d6d6d6" stroke-width="0.8" opacity="0.7"/><path d="M937.1 24.8V32.2H944.4000000000001" fill="none" stroke="#d6d6d6" stroke-width="0.8" opacity="0.85"/><rect x="938.6" y="23.4" width="7.4" height="7.4" rx="0.8" fill="#d6d6d6"/><path d="M939.2 30L941.8000000000001 26.2L943.4000000000001 28.4L944.2 27.6L945.4000000000001 30Z" fill="#2a2a2a"/><circle cx="944.4000000000001" cy="25.2" r="0.8" fill="#2a2a2a"/></svg>
<svg style="left:972.3px;top:21.2px;" width="14" height="14" viewBox="972.3 21.2 14 14"><circle cx="980.5" cy="27.0" r="3.1" fill="none" stroke="#d0d0d0" stroke-width="1"/><path d="M978.4 29.099999999999998L975.3 32.2" stroke="#d0d0d0" stroke-width="1.1" stroke-linecap="round"/></svg>
<svg style="left:666.0px;top:47.8px;" width="16" height="16" viewBox="666.0 47.8 16 16"><g transform="translate(674.0,55.8) scale(1.0)"><path d="M-4.2 -5.4V0.4" stroke="#cdcdcd" stroke-width="1.1"/><rect x="-5.3" y="0.4" width="2.3" height="4.6" rx="1" fill="#cdcdcd"/><path d="M0.9 -5.2V-2.4A2.1 2.1 0 0 0 5.1 -2.4V-5.2" fill="none" stroke="#cdcdcd" stroke-width="1.3"/><path d="M3 -0.6V5.2" stroke="#cdcdcd" stroke-width="1.7" stroke-linecap="round"/></g></svg>
<div style="left:667px;top:69.4px;width:14.5px;height:0.8px;background:#222222;border-radius:0px;"></div>
<svg style="left:666.0px;top:75.6px;" width="16" height="16" viewBox="666.0 75.6 16 16"><g transform="translate(674.0,83.6) scale(1.0)"><rect x="-5.4" y="-2.8" width="10.8" height="7.8" rx="1" fill="none" stroke="#cdcdcd" stroke-width="1.1"/><rect x="-3.6" y="-1" width="4.6" height="4.2" fill="#4a4a4a" stroke="#cdcdcd" stroke-width="0.5"/><path d="M-3.8 -3V-4.8H-0.6V-3M3.2 -1.2V3.2" stroke="#cdcdcd" stroke-width="1" fill="none"/><circle cx="4.2" cy="-4.4" r="0.7" fill="#cdcdcd"/></g></svg>
<svg style="left:666.0px;top:98.2px;" width="16" height="16" viewBox="666.0 98.2 16 16"><g transform="translate(674.0,106.2) scale(1.0)"><path d="M-5.4 -5.2H5.4V-0.4H3.4V-2.6H-3.4V-0.4H-5.4Z" fill="#cdcdcd"/><rect x="-3.1" y="-1.8" width="6.2" height="6.8" fill="none" stroke="#cdcdcd" stroke-width="0.9"/><path d="M-2.4 4.2L-0.2 1.2L1 2.8L2.4 4.2Z" fill="#cdcdcd"/><circle cx="1.6" cy="0" r="0.6" fill="#cdcdcd"/></g></svg>
<svg style="left:667.2px;top:122.2px;" width="14" height="14" viewBox="667.2 122.2 14 14"><path d="M668.7 126.4V133.8H676.0" fill="none" stroke="#cdcdcd" stroke-width="0.8" opacity="0.7"/><path d="M670.1 125.0V132.4H677.4000000000001" fill="none" stroke="#cdcdcd" stroke-width="0.8" opacity="0.85"/><rect x="671.6" y="123.60000000000001" width="7.4" height="7.4" rx="0.8" fill="#cdcdcd"/><path d="M672.2 130.2L674.8000000000001 126.4L676.4000000000001 128.6L677.2 127.8L678.4000000000001 130.2Z" fill="#2a2a2a"/><circle cx="677.4000000000001" cy="125.4" r="0.8" fill="#2a2a2a"/></svg>
<svg style="left:666.0px;top:142.5px;" width="16" height="16" viewBox="666.0 142.5 16 16"><g transform="translate(674.0,150.5) scale(1.0)"><path d="M-5.2 3.6L-2.4 -4.6L0.2 3.6Z" fill="#cdcdcd"/><circle cx="3.9" cy="-3.6" r="1.35" fill="#cdcdcd"/><circle cx="2.7" cy="2.6" r="2.6" fill="#1c1c1c" stroke="#cdcdcd" stroke-width="1"/><path d="M2.7 2.6L4.6 1" stroke="#cdcdcd" stroke-width="0.7"/></g></svg>
<svg style="left:666.0px;top:164.9px;" width="16" height="16" viewBox="666.0 164.9 16 16"><g transform="translate(674.0,172.9) scale(1.0)"><circle cx="0" cy="0" r="4.9" fill="none" stroke="#d25a68" stroke-width="1"/><path d="M-3.6 -1.8C-2.6 -3.4 -0.6 -3.6 0.2 -2.6C1 -1.6 -0.2 -0.6 0.6 0.2C1.6 1 3 0.2 3.6 1.4C2.8 3.6 0.8 4.2 -0.2 3.8C-0.6 2.6 -0.2 1.8 -1.2 1.2C-2.4 0.6 -3.8 0 -3.6 -1.8Z" fill="#d25a68"/><path d="M-5.6 1.6L-3.2 4.8M3.4 -4.8L5.6 -1.8" stroke="#d25a68" stroke-width="0.8"/></g></svg>
<svg style="left:666.0px;top:193.4px;" width="16" height="16" viewBox="666.0 193.4 16 16"><g transform="translate(674.0,201.4) scale(1.0)"><rect x="-5.4" y="-5.2" width="10.8" height="2.9" fill="none" stroke="#cdcdcd" stroke-width="1"/><path d="M-4.6 -2.2V5H4.6V-2.2" fill="none" stroke="#cdcdcd" stroke-width="1"/><rect x="-1.6" y="-0.6" width="3.2" height="1.6" fill="#cdcdcd"/></g></svg>
<div style="left:666.5px;top:212.3px;width:14.5px;height:0.8px;background:#2a2a2a;border-radius:0px;"></div>
<svg style="left:666.0px;top:221.5px;" width="16" height="16" viewBox="666.0 221.5 16 16"><g transform="translate(674.0,229.5) scale(1.0)"><rect x="-3.1" y="-3.1" width="6.2" height="6.2" rx="0.6" fill="#d98a48"/><path d="M-5.6 -3V-5.6H-3M3 -5.6H5.6V-3M5.6 3V5.6H3M-3 5.6H-5.6V3" fill="none" stroke="#d98a48" stroke-width="1"/></g></svg>
<svg style="left:666.0px;top:243.7px;" width="16" height="16" viewBox="666.0 243.7 16 16"><g transform="translate(674.0,251.7) scale(1.0)"><circle cx="-0.6" cy="0.6" r="2.1" fill="#5f8be6"/><path d="M2.3 -3.5A5 5 0 1 0 4.5 1.4" fill="none" stroke="#5f8be6" stroke-width="1"/><circle cx="3.9" cy="-3.5" r="1.1" fill="#5f8be6"/></g></svg>
<svg style="left:666.0px;top:266.3px;" width="16" height="16" viewBox="666.0 266.3 16 16"><g transform="translate(674.0,274.3) scale(1.0)"><g transform="rotate(-35)"><path d="M-5.6 0A3.6 3.6 0 0 1 -2 -3.6L3.4 -2.4A2.5 2.5 0 0 1 3.4 2.4L-2 3.6A3.6 3.6 0 0 1 -5.6 0Z" fill="none" stroke="#5f8be6" stroke-width="1"/><circle cx="-2.2" cy="0" r="2" fill="none" stroke="#5f8be6" stroke-width="1.2"/><circle cx="-2.2" cy="0" r="0.7" fill="#5f8be6"/></g></g></svg>
<div style="left:663px;top:285.9px;width:21.4px;height:20px;background:#303030;border-radius:4px 0 0 4px;"></div>
<svg style="left:666.0px;top:287.9px;" width="16" height="16" viewBox="666.0 287.9 16 16"><g transform="translate(674.0,295.9) scale(1.0)"><circle cx="-0.7" cy="-4.5" r="1.15" fill="#2fcb8e"/><path d="M-5.3 -5.6L-1.6 -1.8M-1.6 -1.8C0.4 -3.2 2.4 -2.8 3.2 -1.6L5 0.2M-1.2 -2.2C-1.8 -0.6 -1.2 0.8 -0.4 1.8M-0.4 1.8L3 3.2L5.2 5.6M-0.4 1.8C-1.6 3.6 -3 4 -4 4.4L-4.6 5.8" fill="none" stroke="#2fcb8e" stroke-width="1.05" stroke-linecap="round" stroke-linejoin="round"/></g></svg>
<svg style="left:666.0px;top:309.9px;" width="16" height="16" viewBox="666.0 309.9 16 16"><g transform="translate(674.0,317.9) scale(1.0)"><g transform="rotate(42)"><path d="M-4 0H4" stroke="#2fcb8e" stroke-width="1.8"/><circle cx="-4.6" cy="-1.2" r="1.35" fill="#2fcb8e"/><circle cx="-4.6" cy="1.2" r="1.35" fill="#2fcb8e"/><circle cx="4.6" cy="-1.2" r="1.35" fill="#2fcb8e"/><circle cx="4.6" cy="1.2" r="1.35" fill="#2fcb8e"/></g></g></svg>
<svg style="left:666.0px;top:331.3px;" width="16" height="16" viewBox="666.0 331.3 16 16"><g transform="translate(674.0,339.3) scale(1.0)"><g transform="rotate(42)"><path d="M-4.4 0H4.4" stroke="#5f8be6" stroke-width="1.6"/><circle cx="-5" cy="-1" r="1.1" fill="#5f8be6"/><circle cx="-5" cy="1" r="1.1" fill="#5f8be6"/><circle cx="5" cy="-1" r="1.1" fill="#5f8be6"/><circle cx="5" cy="1" r="1.1" fill="#5f8be6"/></g><ellipse cx="0.8" cy="-0.8" rx="3.6" ry="2.6" transform="rotate(-40)" fill="none" stroke="#5f8be6" stroke-width="0.9"/></g></svg>
<div style="left:666.5px;top:351.5px;width:14.5px;height:0.8px;background:#2a2a2a;border-radius:0px;"></div>
<svg style="left:666.0px;top:360.4px;" width="16" height="16" viewBox="666.0 360.4 16 16"><g transform="translate(674.0,368.4) scale(1.0)"><rect x="-5.6" y="-5.5" width="11.2" height="11" fill="#d4707c"/><rect x="-5.6" y="-2.75" width="2.8" height="2.75" fill="#1a1214"/><rect x="-5.6" y="2.75" width="2.8" height="2.75" fill="#1a1214"/><rect x="-2.8" y="-5.5" width="2.8" height="2.75" fill="#1a1214"/><rect x="-2.8" y="0.0" width="2.8" height="2.75" fill="#1a1214"/><rect x="0.0" y="-2.75" width="2.8" height="2.75" fill="#1a1214"/><rect x="0.0" y="2.75" width="2.8" height="2.75" fill="#1a1214"/><rect x="2.799999999999999" y="-5.5" width="2.8" height="2.75" fill="#1a1214"/><rect x="2.799999999999999" y="0.0" width="2.8" height="2.75" fill="#1a1214"/></g></svg>
<svg style="left:690.6px;top:45.4px;" width="16" height="16" viewBox="690.6 45.4 16 16"><g transform="translate(698.6,53.4) scale(1.0)"><rect x="-3.3" y="-3.3" width="6.6" height="6.6" rx="0.6" fill="#e2e2e2"/><path d="M-6 -3.2V-6H-3.2M3.2 -6H6V-3.2M6 3.2V6H3.2M-3.2 6H-6V3.2" fill="none" stroke="#d0d0d0" stroke-width="1"/></g></svg>
<svg style="left:782.4px;top:45px;" width="16" height="16" viewBox="782.4 45 16 16"><g transform="translate(790.4,53) scale(1.0)"><circle cx="-0.7" cy="-4.5" r="1.15" fill="#dcdcdc"/><path d="M-5.3 -5.6L-1.6 -1.8M-1.6 -1.8C0.4 -3.2 2.4 -2.8 3.2 -1.6L5 0.2M-1.2 -2.2C-1.8 -0.6 -1.2 0.8 -0.4 1.8M-0.4 1.8L3 3.2L5.2 5.6M-0.4 1.8C-1.6 3.6 -3 4 -4 4.4L-4.6 5.8" fill="none" stroke="#dcdcdc" stroke-width="1.0" stroke-linecap="round" stroke-linejoin="round"/></g></svg>
<svg style="left:692.5px;top:74.9px;" width="16" height="16" viewBox="692.5 74.9 16 16"><g transform="translate(700.5,82.9) scale(1.0)"><circle cx="-0.7" cy="-4.5" r="1.15" fill="#dcdcdc"/><path d="M-5.3 -5.6L-1.6 -1.8M-1.6 -1.8C0.4 -3.2 2.4 -2.8 3.2 -1.6L5 0.2M-1.2 -2.2C-1.8 -0.6 -1.2 0.8 -0.4 1.8M-0.4 1.8L3 3.2L5.2 5.6M-0.4 1.8C-1.6 3.6 -3 4 -4 4.4L-4.6 5.8" fill="none" stroke="#dcdcdc" stroke-width="1.0" stroke-linecap="round" stroke-linejoin="round"/></g></svg>
<svg style="left:871.8px;top:44.8px;" width="16" height="16" viewBox="871.8 44.8 16 16"><g transform="translate(879.8,52.8) scale(1.0)"><g transform="rotate(45)"><path d="M-2.4 -6H2.4M-1.7 -6V-1.8L-3.3 0.4H3.3L1.7 -1.8V-6M0 0.4V6.4" fill="none" stroke="#b4b4b4" stroke-width="1.05" stroke-linecap="round" stroke-linejoin="round"/></g></g></svg>
<svg style="left:870px;top:75.1px;" width="16" height="16" viewBox="870 75.1 16 16"><g transform="translate(878,83.1) scale(1.0)"><path d="M0 -5.2C1.6 -4 3.4 -3.6 4.8 -3.6V0.2C4.8 3 2.6 4.6 0 5.6C-2.6 4.6 -4.8 3 -4.8 0.2V-3.6C-3.4 -3.6 -1.6 -4 0 -5.2Z" fill="none" stroke="#a8a8a8" stroke-width="1" stroke-linejoin="round"/></g></svg>
<svg style="left:897px;top:136px;" width="14" height="14" viewBox="897 136 14 14"><rect x="898.4" y="137.7" width="2.6" height="2.6" fill="#f0f0f0"/><path d="M901 139L908.6 139.3" fill="none" stroke="#c0c8d8" stroke-width="0.8" stroke-linecap="round"/><path d="M904.6 137.6L904.4 142.4L900.3 147.5M904.4 142.4L907.7 147.5" fill="none" stroke="#f0f0f0" stroke-width="0.9" stroke-linecap="round" stroke-linejoin="round"/><circle cx="904.7" cy="137.7" r="0.85" fill="#f0f0f0"/></svg>
<svg style="left:943px;top:134.2px;" width="16" height="16" viewBox="943 134.2 16 16"><g transform="translate(951,142.2) scale(1.0)"><circle cx="0" cy="-4.2" r="1.25" fill="#f0953a"/><path d="M-4.6 -3.4C-3 -1.6 -1.4 -1.4 0 -1.6C1.4 -1.4 3 -1.6 4.6 -3.4M0 -1.8C-0.6 0.4 -0.6 1.4 -2.8 5M0 -1.8C0.6 0.4 0.8 1.6 2.8 5" fill="none" stroke="#f0953a" stroke-width="1.6" stroke-linecap="round" stroke-linejoin="round"/></g></svg>
<svg style="left:585.5px;top:506.6px;" width="16" height="16" viewBox="585.5 506.6 16 16"><g transform="translate(593.5,514.6) scale(1.0)"><path d="M0 -5.2C1.6 -4 3.4 -3.6 4.8 -3.6V0.2C4.8 3 2.6 4.6 0 5.6C-2.6 4.6 -4.8 3 -4.8 0.2V-3.6C-3.4 -3.6 -1.6 -4 0 -5.2Z" fill="none" stroke="#b8b8b8" stroke-width="1" stroke-linejoin="round"/></g></svg>
<svg style="left:602.6px;top:507.6px;" width="14" height="14" viewBox="602.6 507.6 14 14"><path d="M607.8000000000001 509.8H612.0L614.2 512.0V517.2H607.8000000000001Z" fill="none" stroke="#e6e6e6" stroke-width="0.95" stroke-linejoin="round"/><path d="M611.8000000000001 509.8V512.2H614.2" fill="none" stroke="#e6e6e6" stroke-width="0.8"/><path d="M607.8000000000001 512.2H605.2V519.6H611.4V517.2" fill="none" stroke="#e6e6e6" stroke-width="0.95" stroke-linejoin="round"/></svg>
<svg style="left:620.5px;top:509.6px;" width="10" height="10" viewBox="0 0 10 10"><path d="M2.1 2.1L7.9 7.9M7.9 2.1L2.1 7.9" stroke="#e6e6e6" stroke-width="1.1" stroke-linecap="round"/></svg>
</div></body></html>
